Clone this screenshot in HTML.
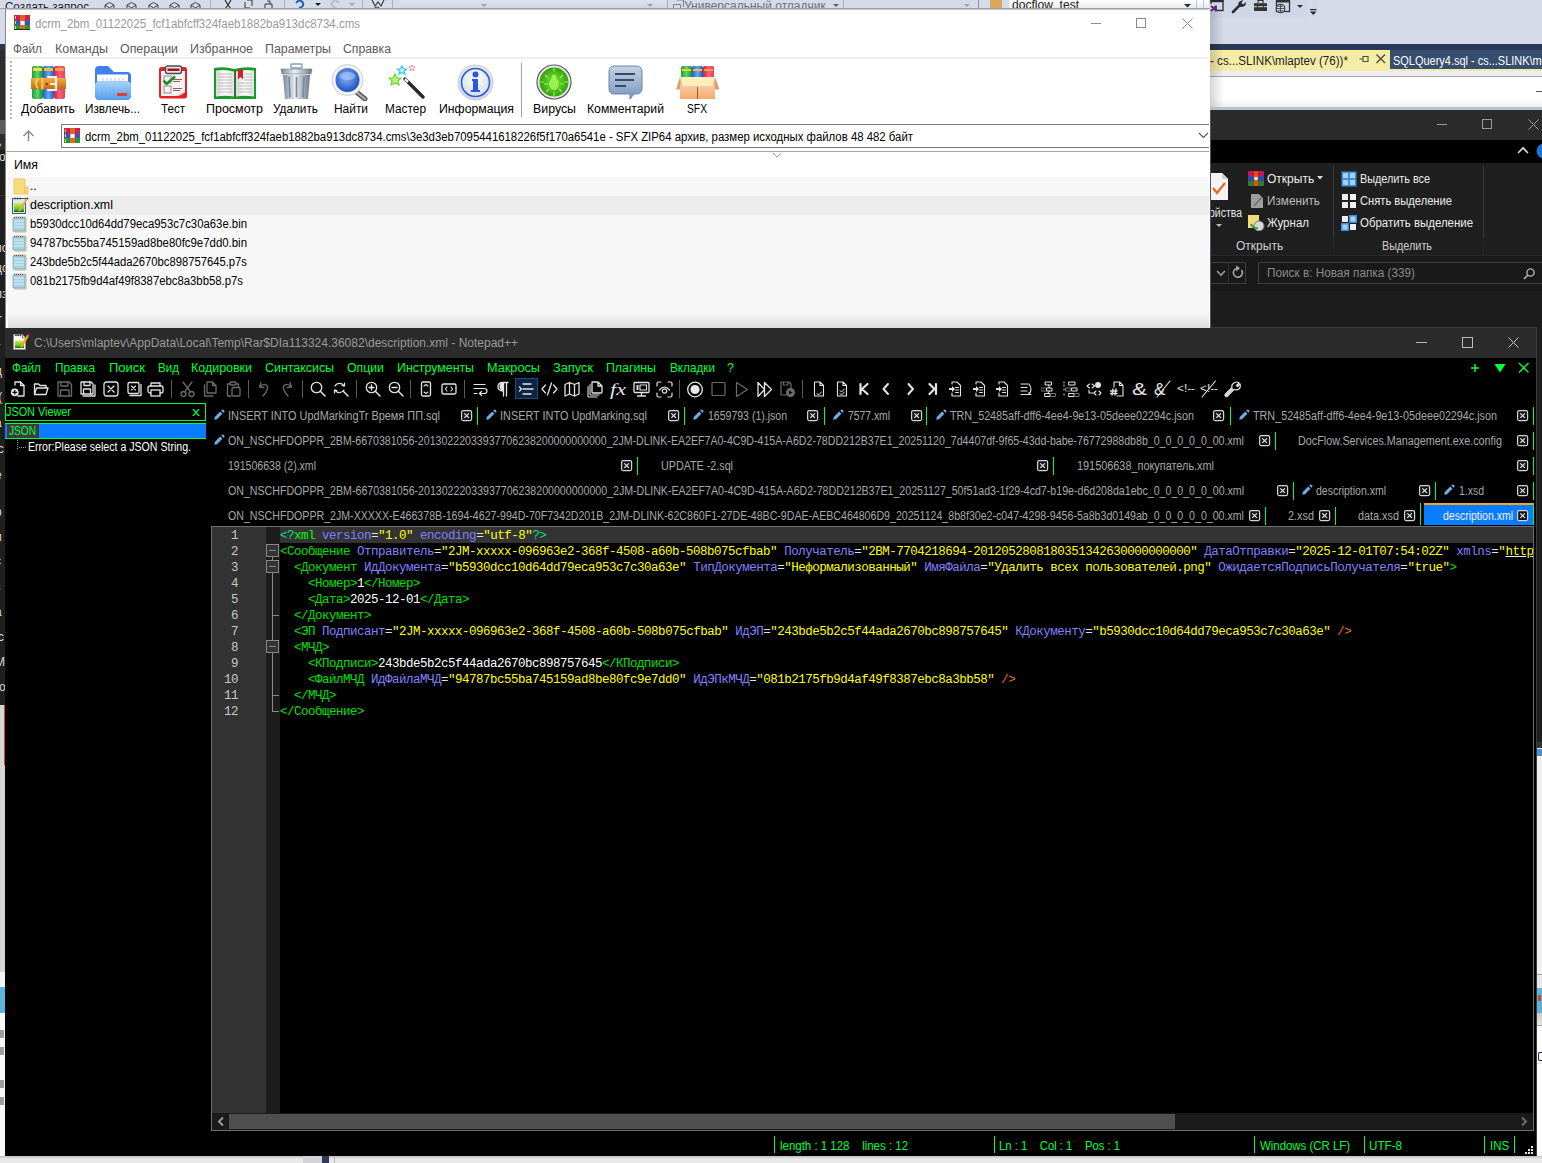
<!DOCTYPE html><html><head><meta charset="utf-8"><title>screen</title><style>

*{margin:0;padding:0;box-sizing:border-box}
html,body{width:1542px;height:1163px;overflow:hidden;background:#000;position:relative}
.a{position:absolute;display:block}
.t{position:absolute;white-space:pre;display:block;transform-origin:0 0}

</style></head><body>
<div class="a" style="left:0px;top:0px;width:6px;height:44px;background:#d6dbe9;"></div>
<div class="a" style="left:0px;top:44px;width:6px;height:6px;background:#293955;"></div>
<div class="a" style="left:0px;top:50px;width:6px;height:100px;background:#2d2d30;"></div>
<div class="a" style="left:5px;top:60px;width:1px;height:15px;background:#e8c860;"></div>
<div class="a" style="left:0px;top:150px;width:6px;height:555px;background:#1f1f1f;"></div>
<div class="a" style="left:0px;top:120px;width:5px;height:14px;background:#5a5a5a;"></div>
<div class="a" style="left:0px;top:195px;width:5px;height:1px;background:#3a3a3a;"></div>
<div class="a" style="left:-5px;top:136px;width:10px;height:14px;overflow:hidden;font:12px/14px 'Liberation Sans',sans-serif;color:#d8d8d8;white-space:pre">ь</div>
<div class="a" style="left:-5px;top:150px;width:10px;height:14px;overflow:hidden;font:12px/14px 'Liberation Sans',sans-serif;color:#d8d8d8;white-space:pre">го</div>
<div class="a" style="left:-5px;top:241px;width:10px;height:14px;overflow:hidden;font:12px/14px 'Liberation Sans',sans-serif;color:#d8d8d8;white-space:pre">ис</div>
<div class="a" style="left:-5px;top:261px;width:10px;height:14px;overflow:hidden;font:12px/14px 'Liberation Sans',sans-serif;color:#d8d8d8;white-space:pre">дс</div>
<div class="a" style="left:-5px;top:287px;width:10px;height:14px;overflow:hidden;font:12px/14px 'Liberation Sans',sans-serif;color:#d8d8d8;white-space:pre">лз</div>
<div class="a" style="left:-5px;top:312px;width:10px;height:14px;overflow:hidden;font:12px/14px 'Liberation Sans',sans-serif;color:#d8d8d8;white-space:pre">lr</div>
<div class="a" style="left:-5px;top:340px;width:10px;height:14px;overflow:hidden;font:12px/14px 'Liberation Sans',sans-serif;color:#d8d8d8;white-space:pre">т</div>
<div class="a" style="left:-5px;top:364px;width:10px;height:14px;overflow:hidden;font:12px/14px 'Liberation Sans',sans-serif;color:#d8d8d8;white-space:pre">д</div>
<div class="a" style="left:-5px;top:390px;width:10px;height:14px;overflow:hidden;font:12px/14px 'Liberation Sans',sans-serif;color:#d8d8d8;white-space:pre">.(</div>
<div class="a" style="left:-5px;top:416px;width:10px;height:14px;overflow:hidden;font:12px/14px 'Liberation Sans',sans-serif;color:#d8d8d8;white-space:pre">а</div>
<div class="a" style="left:-5px;top:442px;width:10px;height:14px;overflow:hidden;font:12px/14px 'Liberation Sans',sans-serif;color:#d8d8d8;white-space:pre">lc</div>
<div class="a" style="left:-5px;top:468px;width:10px;height:14px;overflow:hidden;font:12px/14px 'Liberation Sans',sans-serif;color:#d8d8d8;white-space:pre">е</div>
<div class="a" style="left:-5px;top:505px;width:10px;height:14px;overflow:hidden;font:12px/14px 'Liberation Sans',sans-serif;color:#d8d8d8;white-space:pre">р</div>
<div class="a" style="left:-5px;top:530px;width:10px;height:14px;overflow:hidden;font:12px/14px 'Liberation Sans',sans-serif;color:#d8d8d8;white-space:pre">и</div>
<div class="a" style="left:-5px;top:554px;width:10px;height:14px;overflow:hidden;font:12px/14px 'Liberation Sans',sans-serif;color:#d8d8d8;white-space:pre">с</div>
<div class="a" style="left:-5px;top:580px;width:10px;height:14px;overflow:hidden;font:12px/14px 'Liberation Sans',sans-serif;color:#d8d8d8;white-space:pre">з</div>
<div class="a" style="left:-5px;top:605px;width:10px;height:14px;overflow:hidden;font:12px/14px 'Liberation Sans',sans-serif;color:#d8d8d8;white-space:pre">а</div>
<div class="a" style="left:-5px;top:630px;width:10px;height:14px;overflow:hidden;font:12px/14px 'Liberation Sans',sans-serif;color:#d8d8d8;white-space:pre">lc</div>
<div class="a" style="left:-5px;top:655px;width:10px;height:14px;overflow:hidden;font:12px/14px 'Liberation Sans',sans-serif;color:#d8d8d8;white-space:pre">М</div>
<div class="a" style="left:-5px;top:680px;width:10px;height:14px;overflow:hidden;font:12px/14px 'Liberation Sans',sans-serif;color:#d8d8d8;white-space:pre">ro</div>
<div class="a" style="left:0px;top:705px;width:6px;height:267px;background:#d6d6d6;"></div>
<div class="a" style="left:4px;top:705px;width:1px;height:60px;background:#d04040;"></div>
<div class="a" style="left:0px;top:972px;width:6px;height:15px;background:#f4f4f4;"></div>
<div class="a" style="left:0px;top:987px;width:6px;height:26px;background:#5cb5dc;"></div>
<div class="a" style="left:0px;top:1013px;width:6px;height:143px;background:#fafafa;"></div>
<div class="a" style="left:0px;top:1030px;width:4px;height:8px;background:#404040;opacity:.5"></div>
<div class="a" style="left:0px;top:1047px;width:4px;height:8px;background:#404040;opacity:.5"></div>
<div class="a" style="left:0px;top:1080px;width:4px;height:8px;background:#404040;opacity:.5"></div>
<div class="a" style="left:0px;top:1097px;width:4px;height:8px;background:#404040;opacity:.5"></div>
<div class="a" style="left:0px;top:1156px;width:1542px;height:7px;background:#e9e9e9;"></div>
<div class="a" style="left:0px;top:1156px;width:1542px;height:3px;background:linear-gradient(#bdbdbd,#e9e9e9);"></div>
<div class="a" style="left:303px;top:1156px;width:19px;height:7px;background:#d2d4da;"></div>
<div class="a" style="left:322px;top:1156px;width:7px;height:7px;background:#2a3a58;"></div>
<div class="a" style="left:334px;top:1156px;width:1px;height:7px;background:#b8b8b8;"></div>
<div class="a" style="left:1537px;top:328px;width:5px;height:414px;background:#1e1e1e;"></div>
<div class="a" style="left:1537px;top:742px;width:5px;height:6px;background:#333333;"></div>
<div class="a" style="left:1537px;top:748px;width:5px;height:10px;background:#f4f4f4;"></div>
<div class="a" style="left:1537px;top:749px;width:5px;height:7px;background:#4a90d0;"></div>
<div class="a" style="left:1537px;top:758px;width:5px;height:216px;background:#f0f0f0;"></div>
<div class="a" style="left:1537px;top:974px;width:5px;height:1px;background:#a0a0a0;"></div>
<div class="a" style="left:1537px;top:975px;width:5px;height:13px;background:#e8e8e8;"></div>
<div class="a" style="left:1537px;top:988px;width:5px;height:25px;background:#5ab4d8;"></div>
<div class="a" style="left:1538px;top:995px;width:3px;height:6px;background:#d04040;"></div>
<div class="a" style="left:1537px;top:1013px;width:5px;height:12px;background:linear-gradient(#c8c8c8,#e8e8e8);"></div>
<div class="a" style="left:1537px;top:1025px;width:5px;height:1px;background:#a0a0a0;"></div>
<div class="a" style="left:1537px;top:1026px;width:5px;height:130px;background:#fdfdfd;"></div>
<div class="a" style="left:1538px;top:1052px;width:4px;height:9px;border:1.5px solid #1e2a4a;border-right:none;border-radius:2px 0 0 2px"></div>
<div class="a" style="left:1537px;top:1063px;width:5px;height:1px;background:#dddddd;"></div>
<div class="a" style="left:0px;top:0px;width:1542px;height:9px;background:#d6dbe9;"></div>
<div class="a" style="left:1210px;top:0px;width:332px;height:44px;background:#d6dbe9;"></div>
<div class="a" style="left:1210px;top:0px;width:97px;height:18px;background:#cfd6e5;"></div>
<div class="a" style="left:1307px;top:0px;width:11px;height:18px;background:#d3d9e7;"></div>
<span class="t" id="t0" style="left:5px;top:1px;font-family:'Liberation Sans',sans-serif;font-size:12px;line-height:12px;color:#1e1e1e;transform:scaleX(0.9659);">Создать запрос</span>
<svg class="a" style="left:103px;top:0px;" width="13" height="9" viewBox="0 0 13 9"><path d="M2 5 L6.5 2.5 L11 5 L11 10 L2 10 Z M2 5 L6.5 8 L11 5" fill="none" stroke="#424242" stroke-width="1"/></svg>
<svg class="a" style="left:125px;top:0px;" width="13" height="9" viewBox="0 0 13 9"><path d="M2 5 L6.5 2.5 L11 5 L11 10 L2 10 Z M2 5 L6.5 8 L11 5" fill="none" stroke="#424242" stroke-width="1"/></svg>
<svg class="a" style="left:147px;top:0px;" width="13" height="9" viewBox="0 0 13 9"><path d="M2 5 L6.5 2.5 L11 5 L11 10 L2 10 Z M2 5 L6.5 8 L11 5" fill="none" stroke="#424242" stroke-width="1"/></svg>
<svg class="a" style="left:168px;top:0px;" width="13" height="9" viewBox="0 0 13 9"><path d="M2 5 L6.5 2.5 L11 5 L11 10 L2 10 Z M2 5 L6.5 8 L11 5" fill="none" stroke="#424242" stroke-width="1"/></svg>
<svg class="a" style="left:189px;top:0px;" width="13" height="9" viewBox="0 0 13 9"><path d="M2 5 L6.5 2.5 L11 5 L11 10 L2 10 Z M2 5 L6.5 8 L11 5" fill="none" stroke="#424242" stroke-width="1"/></svg>
<div class="a" style="left:210px;top:0px;width:1px;height:8px;background:#a8b0c0;"></div>
<svg class="a" style="left:222px;top:0px;" width="11" height="9" viewBox="0 0 11 9"><path d="M3 0 L6 5 L9 0 M6 5 L3 9 M6 5 L9 9" fill="none" stroke="#333" stroke-width="1.2"/></svg>
<svg class="a" style="left:243px;top:0px;" width="11" height="9" viewBox="0 0 11 9"><path d="M2 2 L2 8 L7 8 M4 0 L9 0 L9 6" fill="none" stroke="#333" stroke-width="1"/></svg>
<svg class="a" style="left:263px;top:0px;" width="11" height="9" viewBox="0 0 11 9"><path d="M2 4 L2 9 L9 9 L9 4 Z M4 1 L7 1 L7 4" fill="none" stroke="#333" stroke-width="1"/></svg>
<div class="a" style="left:284px;top:0px;width:1px;height:8px;background:#a8b0c0;"></div>
<svg class="a" style="left:294px;top:0px;" width="12" height="9" viewBox="0 0 12 9"><path d="M2 3 Q6 -2 9 3 Q10 7 5 8" fill="none" stroke="#1f5fb5" stroke-width="2"/></svg>
<svg class="a" style="left:315px;top:3px;" width="7" height="4" viewBox="0 0 7 4"><path d="M0 0 L6 0 L3 3 Z" fill="#1e1e1e"/></svg>
<svg class="a" style="left:329px;top:0px;" width="12" height="9" viewBox="0 0 12 9"><path d="M10 3 Q6 -2 3 3 Q2 7 7 8" fill="none" stroke="#b9bdc6" stroke-width="2"/></svg>
<svg class="a" style="left:349px;top:3px;" width="7" height="4" viewBox="0 0 7 4"><path d="M0 0 L6 0 L3 3 Z" fill="#a0a6b0"/></svg>
<div class="a" style="left:362px;top:0px;width:1px;height:8px;background:#a8b0c0;"></div>
<svg class="a" style="left:371px;top:0px;" width="14" height="9" viewBox="0 0 14 9"><path d="M1 0 L4 6 L7 2 L10 6 L13 0 M3 9 Q6 5 9 9" fill="none" stroke="#333" stroke-width="1.1"/></svg>
<div class="a" style="left:392px;top:0px;width:1px;height:8px;background:#a8b0c0;"></div>
<div class="a" style="left:400px;top:0px;width:267px;height:9px;background:linear-gradient(#dfe3ee,#cdd3e1);"></div>
<svg class="a" style="left:481px;top:4px;" width="7" height="4" viewBox="0 0 7 4"><path d="M0 0 L6 0 L3 3 Z" fill="#9aa2b2"/></svg>
<svg class="a" style="left:647px;top:4px;" width="7" height="4" viewBox="0 0 7 4"><path d="M0 0 L6 0 L3 3 Z" fill="#9aa2b2"/></svg>
<div class="a" style="left:667px;top:0px;width:1px;height:8px;background:#a8b0c0;"></div>
<svg class="a" style="left:673px;top:0px;" width="12" height="9" viewBox="0 0 12 9"><path d="M0.5 4.5 L7.5 4.5 L7.5 8.5 L0.5 8.5 Z M3.5 0 L10.5 0 L10.5 7" fill="none" stroke="#7a7f8a" stroke-width="1"/></svg>
<span class="t" id="t1" style="left:684px;top:0px;font-family:'Liberation Sans',sans-serif;font-size:12px;line-height:12px;color:#6e7179;">Универсальный отладчик</span>
<svg class="a" style="left:833px;top:4px;" width="7" height="4" viewBox="0 0 7 4"><path d="M0 0 L6 0 L3 3 Z" fill="#5a5f6a"/></svg>
<div class="a" style="left:843px;top:0px;width:1px;height:8px;background:#a8b0c0;"></div>
<svg class="a" style="left:964px;top:4px;" width="7" height="4" viewBox="0 0 7 4"><path d="M0 0 L6 0 L3 3 Z" fill="#9aa2b2"/></svg>
<div class="a" style="left:978px;top:0px;width:1px;height:8px;background:#8890a0;"></div>
<div class="a" style="left:990px;top:0px;width:12px;height:9px;background:#d9a859;"></div>
<div class="a" style="left:1009px;top:0px;width:200px;height:9px;background:linear-gradient(#ffffff,#e8e8e8);"></div>
<span class="t" id="t2" style="left:1012px;top:-1px;font-family:'Liberation Sans',sans-serif;font-size:12px;line-height:12px;color:#1e1e1e;transform:scaleX(1.0045);">docflow_test</span>
<svg class="a" style="left:1184px;top:4px;" width="8" height="4" viewBox="0 0 8 4"><path d="M0 0 L7 0 L3.5 3.5 Z" fill="#1e2a3e"/></svg>
<div class="a" style="left:1196px;top:0px;width:1px;height:9px;background:#bfc6d4;"></div>
<div class="a" style="left:1203px;top:0px;width:1px;height:9px;background:#bfc6d4;"></div>
<div class="a" style="left:0px;top:8px;width:1210px;height:1px;background:#9aa0aa;"></div>
<svg class="a" style="left:1208px;top:0px;" width="100" height="18" viewBox="0 0 100 18"><rect x="3" y="-1" width="12" height="11.5" fill="none" stroke="#2a2a2a" stroke-width="1.3"/><rect x="2.5" y="0" width="13" height="2.2" fill="#2a2a2a"/><rect x="2" y="4" width="7" height="9" fill="#cfd6e5"/><path d="M3 6 L8 10.5 M3 11 L8 6 M8 5.5 L8 11.5" fill="none" stroke="#68217a" stroke-width="1.8"/><path d="M25 12 L32 5" stroke="#2e2e2e" stroke-width="2.6" stroke-linecap="round"/><path d="M30.5 6.5 Q29 1.5 34 0.5 L35.5 0 L33.5 2.8 L35 4.4 L38 2 Q38.5 6.5 33.5 7" fill="#2e2e2e"/><rect x="46" y="3.2" width="13" height="7.8" fill="#333"/><rect x="46" y="6.2" width="13" height="1" fill="#cfd6e5"/><rect x="49" y="6" width="1" height="1.6" fill="#333"/><rect x="55" y="6" width="1" height="1.6" fill="#333"/><path d="M50 3 L50 0.5 L55 0.5 L55 3" fill="none" stroke="#333" stroke-width="1.2"/><rect x="68.5" y="0" width="13" height="11.5" fill="none" stroke="#333" stroke-width="1.3"/><rect x="68" y="0" width="14" height="2.5" fill="#333"/><circle cx="72.5" cy="8.5" r="4.3" fill="#cfd6e5" stroke="#333" stroke-width="1.1"/><path d="M68.5 8.5 L76.5 8.5 M72.5 4.5 L72.5 12.5 M70 6.2 L75 6.2 M70 10.8 L75 10.8" stroke="#333" stroke-width=".8"/><path d="M89 5 L95 5 L92 8 Z" fill="#1e2a3e"/></svg>
<svg class="a" style="left:1310px;top:8px;" width="8" height="8" viewBox="0 0 8 8"><rect x="0" y="1" width="6.5" height="1.2" fill="#1e2a3e"/><path d="M0 3.5 L6.5 3.5 L3.25 7 Z" fill="#1e2a3e"/></svg>
<div class="a" style="left:1210px;top:44px;width:332px;height:6px;background:#293955;"></div>
<div class="a" style="left:1210px;top:50px;width:180px;height:21px;background:#f5eca6;"></div>
<div class="a" style="left:1210px;top:50px;width:180px;height:1px;background:#fff29d;"></div>
<span class="t" id="t3" style="left:1210px;top:55px;font-family:'Liberation Sans',sans-serif;font-size:12px;line-height:12px;color:#1e1e1e;transform:scaleX(0.9669);">- cs...SLINK\mlaptev (76))*</span>
<svg class="a" style="left:1358px;top:53px;" width="12" height="12" viewBox="0 0 12 12"><path d="M1.5 6 L5 6 M5 3 L5 9 M5 3.5 L10 3.5 L10 8.5 L5 8.5" fill="none" stroke="#4a4a3a" stroke-width="1.1"/></svg>
<svg class="a" style="left:1375px;top:53px;" width="12" height="12" viewBox="0 0 12 12"><path d="M1.5 1.5 L10 10 M10 1.5 L1.5 10" fill="none" stroke="#4a4a3a" stroke-width="1.3"/></svg>
<div class="a" style="left:1390px;top:50px;width:152px;height:19px;background:#364e6f;"></div>
<div class="a" style="left:1390px;top:69px;width:152px;height:2px;background:#f5eca6;"></div>
<span class="t" id="t4" style="left:1393px;top:55px;font-family:'Liberation Sans',sans-serif;font-size:12px;line-height:12px;color:#ffffff;transform:scaleX(0.9140);">SQLQuery4.sql - cs...SLINK\mlaptev</span>
<div class="a" style="left:1210px;top:71px;width:332px;height:5px;background:#eeeef2;"></div>
<div class="a" style="left:1210px;top:76px;width:332px;height:1px;background:#a8a8a8;"></div>
<div class="a" style="left:1210px;top:77px;width:332px;height:30px;background:linear-gradient(#ffffff 0px,#ffffff 22px,#f0f0f0 30px);"></div>
<div class="a" style="left:1210px;top:9px;width:14px;height:98px;background:linear-gradient(90deg,rgba(0,0,0,0.16),rgba(0,0,0,0));"></div>
<div class="a" style="left:1536px;top:91px;width:6px;height:1px;background:#555;"></div>
<div class="a" style="left:1210px;top:107px;width:332px;height:3px;background:#b4c4c8;"></div>
<div class="a" style="left:1210px;top:110px;width:332px;height:30px;background:#2b2b2b;"></div>
<div class="a" style="left:1437px;top:124px;width:10px;height:1px;background:#9a9a9a;"></div>
<div class="a" style="left:1482px;top:119px;width:10px;height:10px;border:1px solid #9a9a9a"></div>
<svg class="a" style="left:1528px;top:119px;" width="11" height="11" viewBox="0 0 11 11"><path d="M0.5 0.5 L10.5 10.5 M10.5 0.5 L0.5 10.5" stroke="#a0a0a0" stroke-width="1"/></svg>
<div class="a" style="left:1210px;top:140px;width:332px;height:23px;background:#000;"></div>
<svg class="a" style="left:1517px;top:146px;" width="12" height="8" viewBox="0 0 12 8"><path d="M1 7 L6 2 L11 7" fill="none" stroke="#dcdcdc" stroke-width="1.6"/></svg>
<svg class="a" style="left:1536px;top:143px;" width="8" height="16" viewBox="0 0 8 16"><circle cx="8" cy="8" r="7.5" fill="#1976d2"/></svg>
<div class="a" style="left:1210px;top:163px;width:332px;height:92px;background:#1f1f1f;"></div>
<svg class="a" style="left:1210px;top:172px;" width="20" height="30" viewBox="0 0 20 30"><path d="M0 1 L12 1 L18 7 L18 28 L0 28 Z" fill="#f4f4f4"/><path d="M12 1 L12 7 L18 7" fill="#cfcfcf"/><path d="M3 16 L7 21 L15 11" fill="none" stroke="#e8641b" stroke-width="2.2"/></svg>
<span class="t" id="t5" style="left:1209px;top:207px;font-family:'Liberation Sans',sans-serif;font-size:12px;line-height:12px;color:#e6e6e6;transform:scaleX(0.8731);">ойства</span>
<svg class="a" style="left:1216px;top:224px;" width="7" height="4" viewBox="0 0 7 4"><path d="M0 0 L6 0 L3 3 Z" fill="#bdbdbd"/></svg>
<svg class="a" style="left:1248px;top:171px;" width="17" height="15" viewBox="0 0 17 15"><rect x="0" y="0" width="16" height="15" fill="#2e7d32"/><rect x="0" y="0" width="16" height="5" fill="#c2185b"/><rect x="0" y="5" width="16" height="5" fill="#3949ab"/><rect x="6" y="0" width="4" height="15" fill="#e65100"/><rect x="6.5" y="6" width="3" height="3" fill="#fff"/></svg>
<span class="t" id="t6" style="left:1267px;top:173px;font-family:'Liberation Sans',sans-serif;font-size:12px;line-height:12px;color:#ececec;">Открыть</span>
<svg class="a" style="left:1317px;top:176px;" width="7" height="5" viewBox="0 0 7 5"><path d="M0 0 L6 0 L3 3.5 Z" fill="#dcdcdc"/></svg>
<svg class="a" style="left:1250px;top:193px;" width="15" height="16" viewBox="0 0 15 16"><path d="M1 1 L9 1 L13 5 L13 15 L1 15 Z" fill="#9e9e9e"/><path d="M4 13 L12 4" stroke="#6e6e6e" stroke-width="1.5"/></svg>
<span class="t" id="t7" style="left:1267px;top:195px;font-family:'Liberation Sans',sans-serif;font-size:12px;line-height:12px;color:#bdbdbd;transform:scaleX(0.9789);">Изменить</span>
<svg class="a" style="left:1248px;top:215px;" width="17" height="16" viewBox="0 0 17 16"><rect x="0" y="0" width="11" height="13" fill="#f1dc79"/><circle cx="11" cy="11" r="5" fill="#d8d8d8" stroke="#7a7a7a"/><path d="M3 9 Q5 14 10 13" fill="none" stroke="#36a03a" stroke-width="2"/></svg>
<span class="t" id="t8" style="left:1267px;top:217px;font-family:'Liberation Sans',sans-serif;font-size:12px;line-height:12px;color:#ececec;transform:scaleX(0.9590);">Журнал</span>
<span class="t" id="t9" style="left:1236px;top:240px;font-family:'Liberation Sans',sans-serif;font-size:12px;line-height:12px;color:#cfcfcf;">Открыть</span>
<div class="a" style="left:1333px;top:166px;width:1px;height:72px;background:#3a3a3a;"></div>
<div class="a" style="left:1333px;top:240px;width:1px;height:15px;background:#262626;"></div>
<svg class="a" style="left:1341px;top:171px;" width="17" height="16" viewBox="0 0 17 16"><rect x="0.5" y="0.5" width="15" height="15" fill="#3d8fd8"/><rect x="2" y="2" width="5" height="5" fill="#a8d2f5"/><rect x="9" y="2" width="5" height="5" fill="#a8d2f5"/><rect x="2" y="9" width="5" height="5" fill="#a8d2f5"/><rect x="9" y="9" width="5" height="5" fill="#a8d2f5"/></svg>
<span class="t" id="t10" style="left:1360px;top:173px;font-family:'Liberation Sans',sans-serif;font-size:12px;line-height:12px;color:#ececec;transform:scaleX(0.9020);">Выделить все</span>
<svg class="a" style="left:1341px;top:193px;" width="17" height="16" viewBox="0 0 17 16"><rect x="1" y="1" width="6" height="6" fill="#f0f0f0"/><rect x="9" y="1" width="6" height="6" fill="#f0f0f0"/><rect x="1" y="9" width="6" height="6" fill="#f0f0f0"/><rect x="9" y="9" width="6" height="6" fill="#f0f0f0"/></svg>
<span class="t" id="t11" style="left:1360px;top:195px;font-family:'Liberation Sans',sans-serif;font-size:12px;line-height:12px;color:#ececec;transform:scaleX(0.9308);">Снять выделение</span>
<svg class="a" style="left:1341px;top:215px;" width="17" height="16" viewBox="0 0 17 16"><rect x="1" y="1" width="6" height="6" fill="#f0f0f0"/><rect x="8" y="0" width="8" height="8" fill="#3d8fd8"/><rect x="9.5" y="1.5" width="5" height="5" fill="#a8d2f5"/><rect x="0" y="8" width="8" height="8" fill="#3d8fd8"/><rect x="1.5" y="9.5" width="5" height="5" fill="#a8d2f5"/><rect x="9" y="9" width="6" height="6" fill="#f0f0f0"/></svg>
<span class="t" id="t12" style="left:1360px;top:217px;font-family:'Liberation Sans',sans-serif;font-size:12px;line-height:12px;color:#ececec;transform:scaleX(0.9533);">Обратить выделение</span>
<span class="t" id="t13" style="left:1382px;top:240px;font-family:'Liberation Sans',sans-serif;font-size:12px;line-height:12px;color:#cfcfcf;transform:scaleX(0.9032);">Выделить</span>
<div class="a" style="left:1483px;top:166px;width:1px;height:72px;background:#3a3a3a;"></div>
<div class="a" style="left:1483px;top:240px;width:1px;height:15px;background:#262626;"></div>
<div class="a" style="left:1210px;top:255px;width:332px;height:1px;background:#2a2a2a;"></div>
<div class="a" style="left:1210px;top:256px;width:332px;height:35px;background:#191919;"></div>
<div class="a" style="left:1206px;top:262px;width:40px;height:22px;border:1px solid #3f3f3f"></div>
<div class="a" style="left:1228px;top:263px;width:1px;height:20px;background:#333;"></div>
<svg class="a" style="left:1216px;top:270px;" width="10" height="7" viewBox="0 0 10 7"><path d="M1 1 L5 5 L9 1" fill="none" stroke="#9a9a9a" stroke-width="1.6"/></svg>
<svg class="a" style="left:1232px;top:265px;" width="12" height="15" viewBox="0 0 12 15"><path d="M9.5 5 A4.5 4.5 0 1 1 5.5 3.2" fill="none" stroke="#a8a8a8" stroke-width="1.6"/><path d="M4 0.5 L8 3 L4.5 6.5" fill="#a8a8a8"/></svg>
<div class="a" style="left:1258px;top:262px;width:290px;height:22px;border:1px solid #3f3f3f"></div>
<span class="t" id="t14" style="left:1267px;top:267px;font-family:'Liberation Sans',sans-serif;font-size:12px;line-height:12px;color:#8a8a8a;transform:scaleX(0.9806);">Поиск в: Новая папка (339)</span>
<svg class="a" style="left:1523px;top:268px;" width="13" height="12" viewBox="0 0 13 12"><circle cx="7.5" cy="4.5" r="3.6" fill="none" stroke="#b0b0b0" stroke-width="1.4"/><path d="M5 7 L1 11" stroke="#b0b0b0" stroke-width="1.7"/></svg>
<div class="a" style="left:1210px;top:291px;width:332px;height:37px;background:#1d1d1d;"></div>
<div class="a" style="left:5px;top:9px;width:1205px;height:320px;background:#ffffff;"></div>
<div class="a" style="left:5px;top:9px;width:1px;height:320px;background:#8a8a8a;"></div>
<div class="a" style="left:6px;top:9px;width:1204px;height:1px;background:#c8c8c8;"></div>
<div class="a" style="left:1209px;top:9px;width:1px;height:320px;background:#fdfdfd;"></div>
<div class="a" style="left:1210px;top:110px;width:1px;height:218px;background:#50545c;"></div>
<svg class="a" style="left:14px;top:15px;" width="16" height="16" viewBox="0 0 16 16"><rect x="0" y="0" width="16" height="5" fill="#c8234f"/><rect x="0" y="5" width="16" height="5" fill="#4a4fb5"/><rect x="0" y="10" width="16" height="5" fill="#1f9a3a"/><rect x="6" y="0" width="5" height="15" fill="#e8621e"/><rect x="6.5" y="6" width="4" height="4" fill="#fff"/><rect x="1" y="1" width="1" height="3" fill="#f5d742"/><rect x="1" y="6" width="1" height="3" fill="#f5d742"/><rect x="1" y="11" width="1" height="3" fill="#f5d742"/><rect x="0" y="14" width="16" height="1" fill="#0a3a14"/></svg>
<span class="t" id="t15" style="left:35px;top:18px;font-family:'Liberation Sans',sans-serif;font-size:12px;line-height:12px;color:#9a9a9a;transform:scaleX(0.9583);">dcrm_2bm_01122025_fcf1abfcff324faeb1882ba913dc8734.cms</span>
<div class="a" style="left:1091px;top:23px;width:10px;height:1px;background:#8a8a8a;"></div>
<div class="a" style="left:1136px;top:18px;width:10px;height:10px;border:1px solid #8a8a8a"></div>
<svg class="a" style="left:1182px;top:18px;" width="11" height="11" viewBox="0 0 11 11"><path d="M0.5 0.5 L10.5 10.5 M10.5 0.5 L0.5 10.5" stroke="#8a8a8a" stroke-width="1"/></svg>
<span class="t" id="t16" style="left:13px;top:43px;font-family:'Liberation Sans',sans-serif;font-size:12px;line-height:12px;color:#5a5a5a;transform:scaleX(0.9825);">Файл</span>
<span class="t" id="t17" style="left:55px;top:43px;font-family:'Liberation Sans',sans-serif;font-size:12px;line-height:12px;color:#5a5a5a;transform:scaleX(1.0424);">Команды</span>
<span class="t" id="t18" style="left:120px;top:43px;font-family:'Liberation Sans',sans-serif;font-size:12px;line-height:12px;color:#5a5a5a;transform:scaleX(1.0331);">Операции</span>
<span class="t" id="t19" style="left:190px;top:43px;font-family:'Liberation Sans',sans-serif;font-size:12px;line-height:12px;color:#5a5a5a;transform:scaleX(1.0357);">Избранное</span>
<span class="t" id="t20" style="left:265px;top:43px;font-family:'Liberation Sans',sans-serif;font-size:12px;line-height:12px;color:#5a5a5a;transform:scaleX(1.0318);">Параметры</span>
<span class="t" id="t21" style="left:343px;top:43px;font-family:'Liberation Sans',sans-serif;font-size:12px;line-height:12px;color:#5a5a5a;transform:scaleX(1.0196);">Справка</span>
<div class="a" style="left:6px;top:57px;width:1203px;height:2px;background:#f0f0f0;"></div>
<div class="a" style="left:10px;top:61px;width:2px;height:2px;background:#b8b8b8;"></div>
<div class="a" style="left:10px;top:65px;width:2px;height:2px;background:#b8b8b8;"></div>
<div class="a" style="left:10px;top:69px;width:2px;height:2px;background:#b8b8b8;"></div>
<div class="a" style="left:10px;top:73px;width:2px;height:2px;background:#b8b8b8;"></div>
<div class="a" style="left:10px;top:77px;width:2px;height:2px;background:#b8b8b8;"></div>
<div class="a" style="left:10px;top:81px;width:2px;height:2px;background:#b8b8b8;"></div>
<div class="a" style="left:10px;top:85px;width:2px;height:2px;background:#b8b8b8;"></div>
<div class="a" style="left:10px;top:89px;width:2px;height:2px;background:#b8b8b8;"></div>
<div class="a" style="left:10px;top:93px;width:2px;height:2px;background:#b8b8b8;"></div>
<div class="a" style="left:10px;top:97px;width:2px;height:2px;background:#b8b8b8;"></div>
<div class="a" style="left:10px;top:101px;width:2px;height:2px;background:#b8b8b8;"></div>
<div class="a" style="left:10px;top:105px;width:2px;height:2px;background:#b8b8b8;"></div>
<div class="a" style="left:10px;top:109px;width:2px;height:2px;background:#b8b8b8;"></div>
<div class="a" style="left:10px;top:113px;width:2px;height:2px;background:#b8b8b8;"></div>
<div class="a" style="left:10px;top:117px;width:2px;height:2px;background:#b8b8b8;"></div>
<div class="a" style="left:10px;top:121px;width:2px;height:2px;background:#b8b8b8;"></div>
<div class="a" style="left:10px;top:125px;width:2px;height:2px;background:#b8b8b8;"></div>
<div class="a" style="left:10px;top:129px;width:2px;height:2px;background:#b8b8b8;"></div>
<div class="a" style="left:10px;top:133px;width:2px;height:2px;background:#b8b8b8;"></div>
<div class="a" style="left:10px;top:137px;width:2px;height:2px;background:#b8b8b8;"></div>
<div class="a" style="left:10px;top:141px;width:2px;height:2px;background:#b8b8b8;"></div>
<div class="a" style="left:10px;top:145px;width:2px;height:2px;background:#b8b8b8;"></div>
<div class="a" style="left:55px;top:124px;width:2px;height:2px;background:#b8b8b8;"></div>
<div class="a" style="left:55px;top:128px;width:2px;height:2px;background:#b8b8b8;"></div>
<div class="a" style="left:55px;top:132px;width:2px;height:2px;background:#b8b8b8;"></div>
<div class="a" style="left:55px;top:136px;width:2px;height:2px;background:#b8b8b8;"></div>
<div class="a" style="left:55px;top:140px;width:2px;height:2px;background:#b8b8b8;"></div>
<div class="a" style="left:55px;top:144px;width:2px;height:2px;background:#b8b8b8;"></div>
<div class="a" style="left:55px;top:148px;width:2px;height:2px;background:#b8b8b8;"></div>
<svg class="a" style="left:0;top:0" width="1" height="1"><defs><linearGradient id="gG" x1="0" x2="1"><stop offset="0" stop-color="#1e9e3a"/><stop offset=".5" stop-color="#5ad46a"/><stop offset="1" stop-color="#1a8a30"/></linearGradient><linearGradient id="gB" x1="0" x2="1"><stop offset="0" stop-color="#1f5fd0"/><stop offset=".5" stop-color="#62a8f5"/><stop offset="1" stop-color="#1f58c0"/></linearGradient><linearGradient id="gR" x1="0" x2="1"><stop offset="0" stop-color="#d8203a"/><stop offset=".5" stop-color="#f5607a"/><stop offset="1" stop-color="#e0406a"/></linearGradient><linearGradient id="gBelt" x1="0" y1="0" x2="0" y2="1"><stop offset="0" stop-color="#f0b040"/><stop offset="1" stop-color="#c86a10"/></linearGradient><linearGradient id="gFold" x1="0" y1="0" x2="0" y2="1"><stop offset="0" stop-color="#a8d4fa"/><stop offset="1" stop-color="#4c9bea"/></linearGradient><linearGradient id="gTrash" x1="0" x2="1"><stop offset="0" stop-color="#7a8a9a"/><stop offset=".45" stop-color="#e8eef4"/><stop offset="1" stop-color="#6a7a8a"/></linearGradient><radialGradient id="gMag" cx=".45" cy=".4" r=".6"><stop offset="0" stop-color="#8ab4f8"/><stop offset="1" stop-color="#1f4fc0"/></radialGradient><radialGradient id="gInfo" cx=".5" cy=".4" r=".6"><stop offset="0" stop-color="#ffffff"/><stop offset="1" stop-color="#cfd6e2"/></radialGradient><radialGradient id="gVir" cx=".5" cy=".5" r=".55"><stop offset="0" stop-color="#7ae830"/><stop offset="1" stop-color="#2a9a10"/></radialGradient><linearGradient id="gCom" x1="0" y1="0" x2="0" y2="1"><stop offset="0" stop-color="#c4d2e6"/><stop offset="1" stop-color="#7c96bc"/></linearGradient><linearGradient id="gBox" x1="0" y1="0" x2="0" y2="1"><stop offset="0" stop-color="#d89868"/><stop offset=".45" stop-color="#f8c8a0"/><stop offset="1" stop-color="#f8a868"/></linearGradient><linearGradient id="gBook" x1="0" x2="1"><stop offset="0" stop-color="#d8d8d8"/><stop offset=".5" stop-color="#ffffff"/><stop offset="1" stop-color="#e0e0e0"/></linearGradient></defs></svg>
<svg class="a" style="left:30px;top:64px;" width="36" height="38" viewBox="0 0 36 38"><rect x="2" y="2" width="11" height="33" rx="2" fill="url(#gG)"/><rect x="13" y="2" width="11" height="33" rx="2" fill="url(#gB)"/><rect x="24" y="2" width="11" height="33" rx="2" fill="url(#gR)"/><rect x="3" y="4" width="9" height="3" fill="#f2e040"/><rect x="14" y="4" width="9" height="3" fill="#f2c040"/><rect x="25" y="4" width="9" height="3" fill="#f5a040"/><rect x="1" y="14" width="35" height="11" fill="url(#gBelt)"/><path d="M8 14.5 Q4 19.5 8 24.5" fill="none" stroke="#ffe070" stroke-width="1.6"/><rect x="11" y="13.5" width="2.5" height="12" fill="#f8c050"/><path d="M17 13 L26 13 L26 26 L17 26" fill="none" stroke="#f6f2ee" stroke-width="2.2"/><circle cx="16.8" cy="20" r="1" fill="#4a2a08"/><rect x="20" y="19" width="5" height="2" fill="#f0f0f0"/></svg>
<svg class="a" style="left:94px;top:64px;" width="38" height="38" viewBox="0 0 38 38"><path d="M1 6 Q1 2 5 2 L14 2 L20 8 L33 8 Q37 8 37 12 L37 31 Q37 36 32 36 L6 36 Q1 36 1 31 Z" fill="#3f7ff0"/><rect x="3" y="10.5" width="31" height="7" fill="#ffffff"/><path d="M9 14 L9 17 M13 14 L13 17 M17 14 L17 17 M21 14 L21 17 M25 14 L25 17 M29 14 L29 17" stroke="#b8c0cc" stroke-width="1"/><path d="M1 21.5 Q1 17.5 5 17.5 L33 17.5 Q37 17.5 37 21.5 L37 31 Q37 36 32 36 L6 36 Q1 36 1 31 Z" fill="url(#gFold)"/><path d="M6 19 L6 35 M10 19 L10 35 M14 19 L14 35 M18 19 L18 35 M22 19 L22 35 M26 19 L26 35 M30 19 L30 35" stroke="#9ccaf4" stroke-width=".7" opacity=".6"/><rect x="23" y="29" width="10" height="3" fill="#e83a2a"/></svg>
<svg class="a" style="left:157px;top:65px;" width="32" height="36" viewBox="0 0 32 36"><rect x="2" y="2" width="28" height="31.5" rx="2.5" fill="#e42222"/><path d="M4 6 L28 6 L28 27 Q24 31 19 31 L4 31 Z" fill="#f4f4f4"/><path d="M28 27 Q24 31 19 31 L24 28 Z" fill="#c8c8c8"/><rect x="8.5" y="1" width="16" height="7.5" rx="2" fill="#e8e8e8" stroke="#4a4a4a" stroke-width="1.4"/><rect x="10.5" y="3.5" width="12" height="2.5" fill="#a01818"/><rect x="7" y="11" width="7" height="7" fill="none" stroke="#9a7a7a" stroke-width=".9"/><rect x="7" y="21" width="7" height="7" fill="none" stroke="#9a7a7a" stroke-width=".9"/><path d="M6.5 15.5 L9.5 19 L18 11.5" fill="none" stroke="#1e8a2a" stroke-width="2.6"/><path d="M16 14.5 L25 14.5 M16 16.5 L23 16.5 M16 23.5 L25 23.5 M16 25.5 L23 25.5" stroke="#8a4a4a" stroke-width=".9"/></svg>
<svg class="a" style="left:212px;top:65px;" width="46" height="36" viewBox="0 0 46 36"><path d="M2 3 Q12 1 22.5 4 Q33 1 44 3 L44 34 L2 34 Z" fill="#1a9a2a"/><path d="M4 5.5 Q13 4 22 6.5 L22 31.5 Q13 30 4 31.5 Z" fill="url(#gBook)"/><path d="M24 6.5 Q33 4 42 5.5 L42 31.5 Q33 30 24 31.5 Z" fill="url(#gBook)"/><path d="M23 5 L23 33" stroke="#3a5a3a" stroke-width="1"/><path d="M6 9 L20 9 M6 12 L20 12 M6 15 L20 15 M6 18 L20 18 M6 21 L20 21 M6 24 L20 24 M6 27 L20 27 M32 9 L40 9 M32 12 L40 12 M26 18 L40 18 M26 21 L40 21 M26 24 L40 24 M26 27 L40 27 M32 15 L40 15" stroke="#b4b4b4" stroke-width=".9"/><path d="M26 4.5 L31 4.5 L31 14.5 L28.5 12 L26 14.5 Z" fill="#d42020"/></svg>
<svg class="a" style="left:280px;top:63px;" width="33" height="38" viewBox="0 0 33 38"><rect x="11" y="1" width="11" height="4" rx="1" fill="none" stroke="#8a9aaa" stroke-width="1.5"/><path d="M1 6 L32 6 L31 11 L2 11 Z" fill="url(#gTrash)" stroke="#6a7a8a" stroke-width=".6"/><path d="M3 12 L30 12 L28 36 L5 36 Z" fill="url(#gTrash)"/><path d="M9 14 L10 34 M16.5 14 L16.5 34 M24 14 L23 34" stroke="#7a8a9a" stroke-width="1.6"/></svg>
<svg class="a" style="left:330px;top:63px;" width="40" height="38" viewBox="0 0 40 38"><path d="M24 27 L35 36" stroke="#5a5a5a" stroke-width="5" stroke-linecap="round"/><path d="M24 27 L35 36" stroke="#b0b0b0" stroke-width="2" stroke-linecap="round"/><circle cx="17.5" cy="17" r="15.5" fill="#f0f4fa" stroke="#c8d0dc" stroke-width="1"/><circle cx="17.5" cy="17" r="12" fill="url(#gMag)"/><ellipse cx="17.5" cy="13" rx="8" ry="4" fill="#a8c8f8" opacity=".6"/></svg>
<svg class="a" style="left:388px;top:64px;" width="40" height="38" viewBox="0 0 40 38"><path d="M17 15 L35 33" stroke="#2a2a2a" stroke-width="3.5" stroke-linecap="round"/><path d="M17 15 L20 18" stroke="#f0f0f0" stroke-width="2.5"/><path d="M7 10 L9 14 L13 14 L10 17 L11 21 L7 19 L3 21 L4 17 L1 14 L5 14 Z" fill="#b8f090" stroke="#6ad830" stroke-width="1.2"/><path d="M14 2 L15.5 5 L18.5 5 L16 7 L17 10 L14 8.5 L11 10 L12 7 L9.5 5 L12.5 5 Z" fill="#d8f8ff" stroke="#30c8e8" stroke-width="1.2"/><path d="M24 1 L25 3 L27 3 L25.5 4.5 L26 6.5 L24 5.5 L22 6.5 L22.5 4.5 L21 3 L23 3 Z" fill="none" stroke="#f07080" stroke-width=".8"/></svg>
<svg class="a" style="left:457px;top:64px;" width="38" height="38" viewBox="0 0 38 38"><circle cx="18.5" cy="18.5" r="17.5" fill="url(#gInfo)" stroke="#c8ccd4"/><circle cx="18.5" cy="18.5" r="14" fill="none" stroke="#2a5ad8" stroke-width="1.6"/><circle cx="18.5" cy="10.5" r="3" fill="#2a5ad8"/><path d="M15 15 L21 15 L21 26 L23 26 L23 28 L14 28 L14 26 L16 26 L16 17 L15 17 Z" fill="#2a5ad8"/></svg>
<div class="a" style="left:521px;top:63px;width:1px;height:54px;background:#a0a0a0;"></div>
<svg class="a" style="left:536px;top:64px;" width="36" height="37" viewBox="0 0 36 37"><circle cx="18" cy="18" r="17" fill="#e8e8e8" stroke="#5a5a5a" stroke-width="1.2"/><circle cx="18" cy="18" r="14.5" fill="url(#gVir)"/><path d="M18 4 L18 8 M18 28 L18 32 M4 18 L8 18 M28 18 L32 18" stroke="#8af040" stroke-width="1.2"/><ellipse cx="18" cy="20" rx="5" ry="6" fill="#9af050"/><circle cx="18" cy="13" r="2.5" fill="#9af050"/><path d="M12 14 L9 11 M24 14 L27 11 M12 20 L8 20 M24 20 L28 20 M13 25 L10 28 M23 25 L26 28" stroke="#9af050" stroke-width="1.2"/></svg>
<svg class="a" style="left:608px;top:65px;" width="36" height="36" viewBox="0 0 36 36"><path d="M6 1 L28 1 Q34 1 34 7 L34 23 Q34 29 28 29 L26 29 L22 34 L22 29 L6 29 Q1 29 1 23 L1 7 Q1 1 6 1 Z" fill="url(#gCom)" stroke="#6a84ac" stroke-width="1"/><path d="M7 9 L27 9 M7 15 L26 15 M7 21 L18 21" stroke="#3a4a62" stroke-width="2"/></svg>
<svg class="a" style="left:675px;top:64px;" width="46" height="37" viewBox="0 0 46 37"><rect x="6" y="2" width="11" height="12" rx="1.5" fill="url(#gG)"/><rect x="17" y="2" width="11" height="12" rx="1.5" fill="url(#gB)"/><rect x="28" y="2" width="11" height="12" rx="1.5" fill="url(#gR)"/><rect x="7" y="5" width="9" height="2" fill="#f8d030"/><rect x="18" y="5" width="9" height="2" fill="#f8c030"/><rect x="29" y="5" width="9" height="2" fill="#f8a030"/><path d="M5 13 L1 25.5 L5 25.5 Z" fill="#d8a070"/><path d="M40 13 L44.5 25.5 L40 25.5 Z" fill="#d8a070"/><rect x="5" y="13" width="35" height="22" fill="url(#gBox)"/><path d="M5 13 L40 13 L37.5 22 L7.5 22 Z" fill="#fdeebc"/><path d="M22.5 23 L22.5 35" stroke="#a05a28" stroke-width="1"/></svg>
<span class="t" id="t22" style="left:21px;top:103px;font-family:'Liberation Sans',sans-serif;font-size:12px;line-height:12px;color:#000;transform:scaleX(1.0180);">Добавить</span>
<span class="t" id="t23" style="left:85px;top:103px;font-family:'Liberation Sans',sans-serif;font-size:12px;line-height:12px;color:#000;transform:scaleX(0.9819);">Извлечь...</span>
<span class="t" id="t24" style="left:161px;top:103px;font-family:'Liberation Sans',sans-serif;font-size:12px;line-height:12px;color:#000;transform:scaleX(0.9666);">Тест</span>
<span class="t" id="t25" style="left:206px;top:103px;font-family:'Liberation Sans',sans-serif;font-size:12px;line-height:12px;color:#000;transform:scaleX(1.0399);">Просмотр</span>
<span class="t" id="t26" style="left:273px;top:103px;font-family:'Liberation Sans',sans-serif;font-size:12px;line-height:12px;color:#000;transform:scaleX(0.9819);">Удалить</span>
<span class="t" id="t27" style="left:334px;top:103px;font-family:'Liberation Sans',sans-serif;font-size:12px;line-height:12px;color:#000;transform:scaleX(0.9927);">Найти</span>
<span class="t" id="t28" style="left:385px;top:103px;font-family:'Liberation Sans',sans-serif;font-size:12px;line-height:12px;color:#000;transform:scaleX(0.9876);">Мастер</span>
<span class="t" id="t29" style="left:439px;top:103px;font-family:'Liberation Sans',sans-serif;font-size:12px;line-height:12px;color:#000;transform:scaleX(1.0206);">Информация</span>
<span class="t" id="t30" style="left:533px;top:103px;font-family:'Liberation Sans',sans-serif;font-size:12px;line-height:12px;color:#000;transform:scaleX(1.0299);">Вирусы</span>
<span class="t" id="t31" style="left:587px;top:103px;font-family:'Liberation Sans',sans-serif;font-size:12px;line-height:12px;color:#000;transform:scaleX(1.0186);">Комментарий</span>
<span class="t" id="t32" style="left:687px;top:103px;font-family:'Liberation Sans',sans-serif;font-size:12px;line-height:12px;color:#000;transform:scaleX(0.8568);">SFX</span>
<div class="a" style="left:6px;top:120px;width:1203px;height:30px;background:#ffffff;"></div>
<svg class="a" style="left:22px;top:129px;" width="13" height="13" viewBox="0 0 13 13"><path d="M6.5 12 L6.5 2 M1.5 7 L6.5 2 L11.5 7" fill="none" stroke="#8a8a8a" stroke-width="1.5"/></svg>
<div class="a" style="left:61px;top:124px;width:1148px;height:24px;background:#fff;border:1px solid #7a7a7a;border-right:none"></div>
<svg class="a" style="left:64px;top:128px;" width="17" height="16" viewBox="0 0 17 16"><rect x="0" y="0" width="16" height="5" fill="#c8234f"/><rect x="0" y="5" width="16" height="5" fill="#4a4fb5"/><rect x="0" y="10" width="16" height="5" fill="#1f9a3a"/><rect x="6" y="0" width="5" height="15" fill="#e8621e"/><rect x="6.5" y="6" width="4" height="4" fill="#fff"/><rect x="1" y="1" width="1" height="3" fill="#f5d742"/><rect x="1" y="6" width="1" height="3" fill="#f5d742"/><rect x="1" y="11" width="1" height="3" fill="#f5d742"/></svg>
<span class="t" id="t33" style="left:85px;top:131px;font-family:'Liberation Sans',sans-serif;font-size:12px;line-height:12px;color:#000;transform:scaleX(0.9479);">dcrm_2bm_01122025_fcf1abfcff324faeb1882ba913dc8734.cms\3e3d3eb7095441618226f5f170a6541e - SFX ZIP64 архив, размер исходных файлов 48 482 байт</span>
<svg class="a" style="left:1198px;top:132px;" width="11" height="7" viewBox="0 0 11 7"><path d="M1 1 L5.5 5.5 L10 1" fill="none" stroke="#555" stroke-width="1.1"/></svg>
<div class="a" style="left:6px;top:151px;width:1203px;height:1px;background:#a8a8a8;"></div>
<div class="a" style="left:6px;top:152px;width:1202px;height:25px;background:#ffffff;"></div>
<span class="t" id="t34" style="left:14px;top:159px;font-family:'Liberation Sans',sans-serif;font-size:12px;line-height:12px;color:#000;transform:scaleX(1.0267);">Имя</span>
<svg class="a" style="left:772px;top:152px;" width="10" height="6" viewBox="0 0 10 6"><path d="M1 1 L5 5 L9 1" fill="none" stroke="#9a9a9a" stroke-width="1"/></svg>
<div class="a" style="left:8px;top:177px;width:1201px;height:151px;background:#f7f7f7;"></div>
<div class="a" style="left:28px;top:196px;width:1181px;height:19px;background:#ececec;"></div>
<svg class="a" style="left:13px;top:178px;" width="17" height="17" viewBox="0 0 17 17"><path d="M1 1 L12 1 L12 16 L1 16 Z" fill="#f8dc7c" stroke="#e8c050" stroke-width=".8"/><rect x="12" y="9" width="3" height="7" fill="#f8dc7c" stroke="#e8c050" stroke-width=".8"/></svg>
<span class="t" id="t35" style="left:30px;top:180px;font-family:'Liberation Sans',sans-serif;font-size:12px;line-height:12px;color:#000;">..</span>
<svg class="a" style="left:12px;top:197px;" width="17" height="17" viewBox="0 0 17 17"><rect x="0.5" y="1.5" width="13" height="15" fill="#dce8f4" stroke="#3a5a7a" stroke-width="1"/><path d="M3 0.5 L3 2.5 M5.5 0.5 L5.5 2.5 M8 0.5 L8 2.5" stroke="#3a3a3a" stroke-width=".9"/><rect x="2" y="6" width="10" height="9" fill="url(#gNp)"/><path d="M7 14 L14.5 2.5" stroke="#e8b030" stroke-width="2"/><circle cx="15.3" cy="1.5" r="1.1" fill="#b01010"/></svg>
<span class="t" id="t36" style="left:30px;top:199px;font-family:'Liberation Sans',sans-serif;font-size:12px;line-height:12px;color:#000;transform:scaleX(1.0371);">description.xml</span>
<svg class="a" style="left:12px;top:216px;" width="17" height="17" viewBox="0 0 17 17"><path d="M3 1 L14 1 L14 16 L3 16 Z" fill="#f4efe0" stroke="#b8a880" stroke-width=".8"/><path d="M1 2 L13 2 L13 15 L1 15 Z" fill="#a8d0e0" stroke="#6a9ab0" stroke-width=".6"/><path d="M2 5 L12 5 M2 8 L12 8 M2 11 L12 11" stroke="#d8f0f8" stroke-width="1"/><path d="M2 1.5 L12 1.5" stroke="#5a5a5a" stroke-width="1" stroke-dasharray="1 1"/></svg>
<span class="t" id="t37" style="left:30px;top:218px;font-family:'Liberation Sans',sans-serif;font-size:12px;line-height:12px;color:#000;transform:scaleX(0.9453);">b5930dcc10d64dd79eca953c7c30a63e.bin</span>
<svg class="a" style="left:12px;top:235px;" width="17" height="17" viewBox="0 0 17 17"><path d="M3 1 L14 1 L14 16 L3 16 Z" fill="#f4efe0" stroke="#b8a880" stroke-width=".8"/><path d="M1 2 L13 2 L13 15 L1 15 Z" fill="#a8d0e0" stroke="#6a9ab0" stroke-width=".6"/><path d="M2 5 L12 5 M2 8 L12 8 M2 11 L12 11" stroke="#d8f0f8" stroke-width="1"/><path d="M2 1.5 L12 1.5" stroke="#5a5a5a" stroke-width="1" stroke-dasharray="1 1"/></svg>
<span class="t" id="t38" style="left:30px;top:237px;font-family:'Liberation Sans',sans-serif;font-size:12px;line-height:12px;color:#000;transform:scaleX(0.9508);">94787bc55ba745159ad8be80fc9e7dd0.bin</span>
<svg class="a" style="left:12px;top:254px;" width="17" height="17" viewBox="0 0 17 17"><path d="M3 1 L14 1 L14 16 L3 16 Z" fill="#f4efe0" stroke="#b8a880" stroke-width=".8"/><path d="M1 2 L13 2 L13 15 L1 15 Z" fill="#a8d0e0" stroke="#6a9ab0" stroke-width=".6"/><path d="M2 5 L12 5 M2 8 L12 8 M2 11 L12 11" stroke="#d8f0f8" stroke-width="1"/><path d="M2 1.5 L12 1.5" stroke="#5a5a5a" stroke-width="1" stroke-dasharray="1 1"/></svg>
<span class="t" id="t39" style="left:30px;top:256px;font-family:'Liberation Sans',sans-serif;font-size:12px;line-height:12px;color:#000;transform:scaleX(0.9371);">243bde5b2c5f44ada2670bc898757645.p7s</span>
<svg class="a" style="left:12px;top:273px;" width="17" height="17" viewBox="0 0 17 17"><path d="M3 1 L14 1 L14 16 L3 16 Z" fill="#f4efe0" stroke="#b8a880" stroke-width=".8"/><path d="M1 2 L13 2 L13 15 L1 15 Z" fill="#a8d0e0" stroke="#6a9ab0" stroke-width=".6"/><path d="M2 5 L12 5 M2 8 L12 8 M2 11 L12 11" stroke="#d8f0f8" stroke-width="1"/><path d="M2 1.5 L12 1.5" stroke="#5a5a5a" stroke-width="1" stroke-dasharray="1 1"/></svg>
<span class="t" id="t40" style="left:30px;top:275px;font-family:'Liberation Sans',sans-serif;font-size:12px;line-height:12px;color:#000;transform:scaleX(0.9443);">081b2175fb9d4af49f8387ebc8a3bb58.p7s</span>
<div class="a" style="left:8px;top:312px;width:1201px;height:16px;background:linear-gradient(rgba(247,247,247,0),#dcdcdc);"></div>
<div class="a" style="left:5px;top:328px;width:1532px;height:828px;background:#000;"></div>
<div class="a" style="left:5px;top:328px;width:1532px;height:30px;background:#2b2b2b;"></div>
<div class="a" style="left:1536px;top:328px;width:1px;height:828px;background:#3c3c3c;"></div>
<div class="a" style="left:1210px;top:327px;width:327px;height:1px;background:#3c3c3c;"></div>
<svg class="a" style="left:13px;top:333px;" width="18" height="18" viewBox="0 0 18 18"><defs><linearGradient id="gNp" x1="0" y1="0" x2="0" y2="1"><stop offset="0" stop-color="#e8e850"/><stop offset=".7" stop-color="#50c830"/><stop offset="1" stop-color="#0a5a0a"/></linearGradient></defs><path d="M0.5 1.5 L9.5 1.5 L12.5 4.5 L12.5 16.5 L0.5 16.5 Z" fill="#fff" stroke="#8a8a8a" stroke-width=".6"/><circle cx="3" cy="2.3" r=".9" fill="#333"/><circle cx="5.2" cy="2.3" r=".9" fill="#333"/><circle cx="7.4" cy="2.3" r=".9" fill="#333"/><path d="M9.5 1.5 L9.5 4.8 L12.5 4.8" fill="none" stroke="#555" stroke-width=".8"/><rect x="2" y="7.5" width="9" height="7.5" fill="url(#gNp)"/><path d="M8.2 14.2 L14.6 3.2" stroke="#f4a800" stroke-width="2.2"/><path d="M14.6 3.2 L15.4 1.9" stroke="#a0b8d8" stroke-width="2"/><circle cx="15.8" cy="1.4" r="1.2" fill="#c00000"/></svg>
<span class="t" id="t41" style="left:34px;top:337px;font-family:'Liberation Sans',sans-serif;font-size:12px;line-height:12px;color:#9a9a9a;">C:\Users\mlaptev\AppData\Local\Temp\Rar$DIa113324.36082\description.xml - Notepad++</span>
<div class="a" style="left:1416px;top:342px;width:11px;height:1px;background:#bdbdbd;"></div>
<div class="a" style="left:1462px;top:337px;width:11px;height:11px;border:1px solid #bdbdbd"></div>
<svg class="a" style="left:1508px;top:337px;" width="11" height="11" viewBox="0 0 11 11"><path d="M0.5 0.5 L10.5 10.5 M10.5 0.5 L0.5 10.5" stroke="#c4c4c4" stroke-width="1"/></svg>
<span class="t" id="t42" style="left:12px;top:362px;font-family:'Liberation Sans',sans-serif;font-size:12px;line-height:12px;color:#00ff3a;transform:scaleX(0.9825);">Файл</span>
<span class="t" id="t43" style="left:55px;top:362px;font-family:'Liberation Sans',sans-serif;font-size:12px;line-height:12px;color:#00ff3a;transform:scaleX(0.9865);">Правка</span>
<span class="t" id="t44" style="left:109px;top:362px;font-family:'Liberation Sans',sans-serif;font-size:12px;line-height:12px;color:#00ff3a;transform:scaleX(1.0822);">Поиск</span>
<span class="t" id="t45" style="left:158px;top:362px;font-family:'Liberation Sans',sans-serif;font-size:12px;line-height:12px;color:#00ff3a;transform:scaleX(0.9669);">Вид</span>
<span class="t" id="t46" style="left:191px;top:362px;font-family:'Liberation Sans',sans-serif;font-size:12px;line-height:12px;color:#00ff3a;transform:scaleX(1.0377);">Кодировки</span>
<span class="t" id="t47" style="left:265px;top:362px;font-family:'Liberation Sans',sans-serif;font-size:12px;line-height:12px;color:#00ff3a;transform:scaleX(1.0337);">Синтаксисы</span>
<span class="t" id="t48" style="left:347px;top:362px;font-family:'Liberation Sans',sans-serif;font-size:12px;line-height:12px;color:#00ff3a;transform:scaleX(1.0242);">Опции</span>
<span class="t" id="t49" style="left:397px;top:362px;font-family:'Liberation Sans',sans-serif;font-size:12px;line-height:12px;color:#00ff3a;transform:scaleX(1.0290);">Инструменты</span>
<span class="t" id="t50" style="left:487px;top:362px;font-family:'Liberation Sans',sans-serif;font-size:12px;line-height:12px;color:#00ff3a;transform:scaleX(1.0593);">Макросы</span>
<span class="t" id="t51" style="left:553px;top:362px;font-family:'Liberation Sans',sans-serif;font-size:12px;line-height:12px;color:#00ff3a;transform:scaleX(1.0653);">Запуск</span>
<span class="t" id="t52" style="left:606px;top:362px;font-family:'Liberation Sans',sans-serif;font-size:12px;line-height:12px;color:#00ff3a;transform:scaleX(1.0279);">Плагины</span>
<span class="t" id="t53" style="left:670px;top:362px;font-family:'Liberation Sans',sans-serif;font-size:12px;line-height:12px;color:#00ff3a;transform:scaleX(0.9776);">Вкладки</span>
<span class="t" id="t54" style="left:727px;top:362px;font-family:'Liberation Sans',sans-serif;font-size:12px;line-height:12px;color:#00ff3a;transform:scaleX(1.0467);">?</span>
<svg class="a" style="left:1470px;top:363px;" width="10" height="10" viewBox="0 0 10 10"><path d="M5 1 L5 9 M1 5 L9 5" stroke="#00ff3a" stroke-width="1.4"/></svg>
<svg class="a" style="left:1494px;top:363px;" width="12" height="10" viewBox="0 0 12 10"><path d="M0.5 1 L11.5 1 L6 9.5 Z" fill="#00ff3a"/></svg>
<svg class="a" style="left:1518px;top:362px;" width="12" height="11" viewBox="0 0 12 11"><path d="M1 1 L10.5 10.5 M10.5 1 L1 10.5" stroke="#00ff3a" stroke-width="1.3"/></svg>
<svg class="a" style="left:10px;top:381px;" width="16" height="17" viewBox="0 0 16 17"><path d="M5 4 L5 1 L10.5 1 L14 4.5 L14 15 L8 15" fill="none" stroke="#e4e4e4" stroke-width="1.3" stroke-linejoin="round" stroke-linecap="round"/><path d="M10.5 1 L10.5 4.5 L14 4.5" fill="none" stroke="#e4e4e4" stroke-width="1.3" stroke-linejoin="round" stroke-linecap="round"/><circle cx="4.8" cy="11.3" r="3.9" fill="#e4e4e4"/><path d="M4.8 9 L4.8 13.6 M2.5 11.3 L7.1 11.3" stroke="#000" stroke-width="1.2"/></svg>
<svg class="a" style="left:33px;top:381px;" width="16" height="17" viewBox="0 0 16 17"><path d="M1.5 13.5 L1.5 3 L5.5 3 L7 4.5 L13 4.5 L13 6.5" fill="none" stroke="#e4e4e4" stroke-width="1.3" stroke-linejoin="round" stroke-linecap="round"/><path d="M1.5 13.5 L3.5 7 L15 7 L13 13.5 Z" fill="none" stroke="#e4e4e4" stroke-width="1.3" stroke-linejoin="round" stroke-linecap="round"/></svg>
<svg class="a" style="left:57px;top:381px;" width="16" height="17" viewBox="0 0 16 17"><path d="M1 1 L12 1 L14.5 3.5 L14.5 15 L1 15 Z" fill="none" stroke="#6a6a6a" stroke-width="1.3" stroke-linejoin="round" stroke-linecap="round"/><path d="M4 1 L4 5 L11 5 L11 1 M3.5 15 L3.5 9 L12 9 L12 15" fill="none" stroke="#6a6a6a" stroke-width="1.3" stroke-linejoin="round" stroke-linecap="round"/></svg>
<svg class="a" style="left:80px;top:381px;" width="16" height="17" viewBox="0 0 16 17"><path d="M1 1 L11 1 L13 3 L13 13 L1 13 Z" fill="none" stroke="#e4e4e4" stroke-width="1.3" stroke-linejoin="round" stroke-linecap="round"/><path d="M4 1 L4 4.5 L10 4.5 L10 1 M3.5 13 L3.5 8 L10.5 8 L10.5 13 M3 15 L15 15 L15 4" fill="none" stroke="#e4e4e4" stroke-width="1.3" stroke-linejoin="round" stroke-linecap="round"/></svg>
<svg class="a" style="left:103px;top:381px;" width="16" height="17" viewBox="0 0 16 17"><rect x="1" y="1" width="14" height="14" rx="2.5" fill="none" stroke="#e4e4e4" stroke-width="1.3" stroke-linejoin="round" stroke-linecap="round"/><path d="M5 5 L11 11 M11 5 L5 11" fill="none" stroke="#e4e4e4" stroke-width="1.3" stroke-linejoin="round" stroke-linecap="round"/></svg>
<svg class="a" style="left:127px;top:381px;" width="16" height="17" viewBox="0 0 16 17"><rect x="1" y="1.5" width="11" height="11" rx="1.5" fill="none" stroke="#e4e4e4" stroke-width="1.3" stroke-linejoin="round" stroke-linecap="round"/><path d="M4.5 5 L8.5 9 M8.5 5 L4.5 9" fill="none" stroke="#e4e4e4" stroke-width="1.1" stroke-linejoin="round" stroke-linecap="round"/><path d="M3 14.5 L14 14.5 L14 3.5" fill="none" stroke="#e4e4e4" stroke-width="1.3" stroke-linejoin="round" stroke-linecap="round"/></svg>
<svg class="a" style="left:147px;top:381px;" width="17" height="17" viewBox="0 0 17 17"><path d="M4 5 L4 2 L13 2 L13 5" fill="none" stroke="#e4e4e4" stroke-width="1.3" stroke-linejoin="round" stroke-linecap="round"/><rect x="1" y="5" width="15" height="7" rx="2" fill="none" stroke="#e4e4e4" stroke-width="1.3" stroke-linejoin="round" stroke-linecap="round"/><rect x="4" y="9" width="9" height="6" fill="#000" stroke="#e4e4e4" stroke-width="1.3"/></svg>
<div class="a" style="left:171px;top:380px;width:1px;height:18px;background:#5a5a5a;"></div>
<svg class="a" style="left:180px;top:381px;" width="15" height="17" viewBox="0 0 15 17"><circle cx="3.5" cy="13" r="2.5" fill="none" stroke="#6a6a6a" stroke-width="1.3" stroke-linejoin="round" stroke-linecap="round"/><circle cx="11.5" cy="13" r="2.5" fill="none" stroke="#6a6a6a" stroke-width="1.3" stroke-linejoin="round" stroke-linecap="round"/><path d="M4.5 10.8 L12 1 M10.5 10.8 L3 1" fill="none" stroke="#6a6a6a" stroke-width="1.3" stroke-linejoin="round" stroke-linecap="round"/></svg>
<svg class="a" style="left:203px;top:381px;" width="15" height="17" viewBox="0 0 15 17"><path d="M4 12 L4 1 L9.5 1 L13 4.5 L13 12 Z M9.5 1 L9.5 4.5 L13 4.5" fill="none" stroke="#6a6a6a" stroke-width="1.3" stroke-linejoin="round" stroke-linecap="round"/><path d="M1.5 4 L1.5 15 L10 15" fill="none" stroke="#6a6a6a" stroke-width="1.3" stroke-linejoin="round" stroke-linecap="round"/></svg>
<svg class="a" style="left:226px;top:381px;" width="15" height="17" viewBox="0 0 15 17"><path d="M4 3 L1.5 3 L1.5 15 L5 15 M10 3 L12.5 3 L12.5 6" fill="none" stroke="#6a6a6a" stroke-width="1.3" stroke-linejoin="round" stroke-linecap="round"/><rect x="4" y="1" width="6" height="3" rx="1" fill="none" stroke="#6a6a6a" stroke-width="1.3" stroke-linejoin="round" stroke-linecap="round"/><rect x="6" y="6.5" width="8" height="8.5" rx="1" fill="none" stroke="#6a6a6a" stroke-width="1.3" stroke-linejoin="round" stroke-linecap="round"/></svg>
<div class="a" style="left:248px;top:380px;width:1px;height:18px;background:#5a5a5a;"></div>
<svg class="a" style="left:258px;top:381px;" width="12" height="17" viewBox="0 0 12 17"><path d="M3 1.5 L1.5 6 L6 6.5 M1.8 5.8 Q5 2 8.5 4 Q12 7 5 15" fill="none" stroke="#6a6a6a" stroke-width="1.3" stroke-linejoin="round" stroke-linecap="round"/></svg>
<svg class="a" style="left:281px;top:381px;" width="12" height="17" viewBox="0 0 12 17"><path d="M9 1.5 L10.5 6 L6 6.5 M10.2 5.8 Q7 2 3.5 4 Q0 7 7 15" fill="none" stroke="#6a6a6a" stroke-width="1.3" stroke-linejoin="round" stroke-linecap="round"/></svg>
<div class="a" style="left:302px;top:380px;width:1px;height:18px;background:#5a5a5a;"></div>
<svg class="a" style="left:310px;top:381px;" width="16" height="17" viewBox="0 0 16 17"><circle cx="6.5" cy="6.5" r="5.2" fill="none" stroke="#e4e4e4" stroke-width="1.3" stroke-linejoin="round" stroke-linecap="round"/><path d="M10.3 10.3 L15 15" fill="none" stroke="#e4e4e4" stroke-width="1.5" stroke-linejoin="round" stroke-linecap="round"/></svg>
<svg class="a" style="left:333px;top:381px;" width="16" height="17" viewBox="0 0 16 17"><path d="M11 5 A5.2 5.2 0 0 0 2 5 M2 9 A5.2 5.2 0 0 0 11 9" fill="none" stroke="#e4e4e4" stroke-width="1.3" stroke-linejoin="round" stroke-linecap="round"/><path d="M9 4.5 L11.5 5 L11.5 2 M4 9.5 L1.5 9 L1.5 12" fill="none" stroke="#e4e4e4" stroke-width="1.2" stroke-linejoin="round" stroke-linecap="round"/><path d="M10.3 10.3 L15 15" fill="none" stroke="#e4e4e4" stroke-width="1.5" stroke-linejoin="round" stroke-linecap="round"/></svg>
<div class="a" style="left:356px;top:380px;width:1px;height:18px;background:#5a5a5a;"></div>
<svg class="a" style="left:365px;top:381px;" width="16" height="17" viewBox="0 0 16 17"><circle cx="6.5" cy="6.5" r="5.2" fill="none" stroke="#e4e4e4" stroke-width="1.3" stroke-linejoin="round" stroke-linecap="round"/><path d="M6.5 4 L6.5 9 M4 6.5 L9 6.5" fill="none" stroke="#e4e4e4" stroke-width="1.4" stroke-linejoin="round" stroke-linecap="round"/><path d="M10.3 10.3 L15 15" fill="none" stroke="#e4e4e4" stroke-width="1.5" stroke-linejoin="round" stroke-linecap="round"/></svg>
<svg class="a" style="left:388px;top:381px;" width="16" height="17" viewBox="0 0 16 17"><circle cx="6.5" cy="6.5" r="5.2" fill="none" stroke="#e4e4e4" stroke-width="1.3" stroke-linejoin="round" stroke-linecap="round"/><path d="M4 6.5 L9 6.5" fill="none" stroke="#e4e4e4" stroke-width="1.4" stroke-linejoin="round" stroke-linecap="round"/><path d="M10.3 10.3 L15 15" fill="none" stroke="#e4e4e4" stroke-width="1.5" stroke-linejoin="round" stroke-linecap="round"/></svg>
<div class="a" style="left:410px;top:380px;width:1px;height:18px;background:#5a5a5a;"></div>
<svg class="a" style="left:420px;top:381px;" width="12" height="17" viewBox="0 0 12 17"><rect x="1.5" y="1" width="9" height="14" rx="1.5" fill="none" stroke="#e4e4e4" stroke-width="1.3" stroke-linejoin="round" stroke-linecap="round"/><path d="M4 5 L6 3.5 L8 5 M4 11 L6 12.5 L8 11" fill="none" stroke="#e4e4e4" stroke-width="1.1" stroke-linejoin="round" stroke-linecap="round"/></svg>
<svg class="a" style="left:441px;top:381px;" width="16" height="17" viewBox="0 0 16 17"><rect x="1" y="3" width="14" height="10" rx="1.5" fill="none" stroke="#e4e4e4" stroke-width="1.3" stroke-linejoin="round" stroke-linecap="round"/><path d="M6 6 L4.5 8 L6 10 M10 6 L11.5 8 L10 10" fill="none" stroke="#e4e4e4" stroke-width="1.1" stroke-linejoin="round" stroke-linecap="round"/></svg>
<div class="a" style="left:464px;top:380px;width:1px;height:18px;background:#5a5a5a;"></div>
<svg class="a" style="left:473px;top:381px;" width="15" height="17" viewBox="0 0 15 17"><path d="M1 3.5 L12 3.5 M1 7.5 L11 7.5 Q14 7.5 14 10 Q14 12.5 11 12.5 L7 12.5 M1 12.5 L4 12.5 M8.5 10.5 L6.5 12.5 L8.5 14.5" fill="none" stroke="#e4e4e4" stroke-width="1.2" stroke-linejoin="round" stroke-linecap="round"/></svg>
<svg class="a" style="left:497px;top:381px;" width="12" height="17" viewBox="0 0 12 17"><path d="M6 10 Q1 10 1 5.5 Q1 1.5 6 1.5 L11 1.5 M6.5 1.5 L6.5 15 M9.5 1.5 L9.5 15" fill="none" stroke="#e4e4e4" stroke-width="1.3" stroke-linejoin="round" stroke-linecap="round"/><path d="M6 1.5 Q2.5 1.5 2.5 5.5 Q2.5 9.5 6 9.5 Z" fill="#e4e4e4"/></svg>
<div class="a" style="left:515px;top:378px;width:23px;height:21px;background:#0a2440;border:1px solid #1c4f80"></div>
<svg class="a" style="left:518px;top:381px;" width="16" height="17" viewBox="0 0 16 17"><path d="M1.5 6 L3.5 8 L1.5 10 M5 3 L13 3 M5 8 L15 8 M5 13 L13 13" fill="none" stroke="#e4e4e4" stroke-width="1.3" stroke-linejoin="round" stroke-linecap="round"/></svg>
<svg class="a" style="left:541px;top:381px;" width="17" height="17" viewBox="0 0 17 17"><path d="M4.5 4 L1 8 L4.5 12 M12.5 4 L16 8 L12.5 12 M10.5 2 L6.5 14" fill="none" stroke="#e4e4e4" stroke-width="1.3" stroke-linejoin="round" stroke-linecap="round"/></svg>
<svg class="a" style="left:564px;top:381px;" width="16" height="17" viewBox="0 0 16 17"><path d="M1 3.5 L5.5 1.5 L10.5 3.5 L15 1.5 L15 13 L10.5 15 L5.5 13 L1 15 Z M5.5 1.5 L5.5 13 M10.5 3.5 L10.5 15" fill="none" stroke="#e4e4e4" stroke-width="1.3" stroke-linejoin="round" stroke-linecap="round"/></svg>
<svg class="a" style="left:587px;top:381px;" width="16" height="17" viewBox="0 0 16 17"><path d="M5 1 L11 1 L15 5 L15 11 Q15 12 14 12 L6 12 Q5 12 5 11 Z M11 1 L11 5 L15 5" fill="none" stroke="#e4e4e4" stroke-width="1.3" stroke-linejoin="round" stroke-linecap="round"/><path d="M3 3.5 L3 13 Q3 14 4 14 L12 14 M1 5.5 L1 15 Q1 16 2 16 L10 16" fill="none" stroke="#e4e4e4" stroke-width="1.1" stroke-linejoin="round" stroke-linecap="round"/></svg>
<span class="t" id="t55" style="left:610px;top:381px;font-family:'Liberation Serif',serif;font-size:17px;line-height:17px;color:#e4e4e4;transform:scaleX(1.3028);"><i>fx</i></span>
<svg class="a" style="left:633px;top:381px;" width="17" height="17" viewBox="0 0 17 17"><rect x="1" y="1.5" width="15" height="10" rx="1" fill="none" stroke="#e4e4e4" stroke-width="1.3" stroke-linejoin="round" stroke-linecap="round"/><rect x="3.5" y="4" width="2" height="5" fill="#e4e4e4"/><rect x="7" y="4" width="6.5" height="5" fill="none" stroke="#e4e4e4" stroke-width="1.1" stroke-linejoin="round" stroke-linecap="round"/><path d="M8.5 12 L8.5 14 M4.5 15 L12.5 15" fill="none" stroke="#e4e4e4" stroke-width="1.3" stroke-linejoin="round" stroke-linecap="round"/></svg>
<svg class="a" style="left:656px;top:381px;" width="17" height="17" viewBox="0 0 17 17"><path d="M1 5 L1 2.5 Q1 1 2.5 1 L5 1 M12 1 L14.5 1 Q16 1 16 2.5 L16 5 M16 12 L16 14.5 Q16 16 14.5 16 L12 16 M5 16 L2.5 16 Q1 16 1 14.5 L1 12" fill="none" stroke="#e4e4e4" stroke-width="1.2" stroke-linejoin="round" stroke-linecap="round"/><path d="M3.5 9 Q8.5 3 13.5 9" fill="none" stroke="#e4e4e4" stroke-width="1.2" stroke-linejoin="round" stroke-linecap="round"/><circle cx="8.5" cy="10" r="2.2" fill="none" stroke="#e4e4e4" stroke-width="1.2" stroke-linejoin="round" stroke-linecap="round"/></svg>
<div class="a" style="left:679px;top:380px;width:1px;height:18px;background:#5a5a5a;"></div>
<svg class="a" style="left:687px;top:381px;" width="17" height="17" viewBox="0 0 17 17"><circle cx="8" cy="8.5" r="7.3" fill="none" stroke="#e4e4e4" stroke-width="1.3" stroke-linejoin="round" stroke-linecap="round"/><circle cx="8" cy="8.5" r="4.6" fill="#e6e6e6"/></svg>
<svg class="a" style="left:711px;top:381px;" width="15" height="17" viewBox="0 0 15 17"><rect x="1" y="1.5" width="13" height="13" rx="1" fill="none" stroke="#6a6a6a" stroke-width="1.2" stroke-linejoin="round" stroke-linecap="round"/></svg>
<svg class="a" style="left:735px;top:381px;" width="14" height="17" viewBox="0 0 14 17"><path d="M1.5 1.5 L12.5 8.5 L1.5 15.5 Z" fill="none" stroke="#6a6a6a" stroke-width="1.2" stroke-linejoin="round" stroke-linecap="round"/></svg>
<svg class="a" style="left:757px;top:381px;" width="16" height="17" viewBox="0 0 16 17"><path d="M1 1.5 L7.5 8.5 L1 15.5 Z M7.5 1.5 L14.5 8.5 L7.5 15.5 Z" fill="none" stroke="#e4e4e4" stroke-width="1.3" stroke-linejoin="round" stroke-linecap="round"/></svg>
<svg class="a" style="left:780px;top:381px;" width="16" height="17" viewBox="0 0 16 17"><path d="M1 1 L9 1 L11 3 L11 8 M7 14 L1 14 L1 1 M3.5 1 L3.5 4 L8 4 L8 1" fill="none" stroke="#6a6a6a" stroke-width="1.2" stroke-linejoin="round" stroke-linecap="round"/><circle cx="10.5" cy="11.5" r="4.5" fill="#6a6a6a"/><path d="M9 9.5 L12.5 11.5 L9 13.5 Z" fill="#000"/></svg>
<div class="a" style="left:802px;top:380px;width:1px;height:18px;background:#5a5a5a;"></div>
<svg class="a" style="left:813px;top:381px;" width="12" height="17" viewBox="0 0 12 17"><path d="M1.5 1 L7 1 L10.5 4.5 L10.5 15 L1.5 15 Z M7 1 L7 4.5 L10.5 4.5" fill="none" stroke="#e4e4e4" stroke-width="1.1" stroke-linejoin="round" stroke-linecap="round"/><path d="M4 12.5 L5.5 14 L8.5 11" fill="none" stroke="#e4e4e4" stroke-width="1" stroke-linejoin="round" stroke-linecap="round"/></svg>
<svg class="a" style="left:836px;top:381px;" width="12" height="17" viewBox="0 0 12 17"><path d="M1.5 1 L7 1 L10.5 4.5 L10.5 15 L1.5 15 Z M7 1 L7 4.5 L10.5 4.5" fill="none" stroke="#e4e4e4" stroke-width="1.1" stroke-linejoin="round" stroke-linecap="round"/><path d="M4 9.5 L5.5 11 L8.5 8 M4 12.5 L5.5 14 L8.5 11" fill="none" stroke="#e4e4e4" stroke-width="1" stroke-linejoin="round" stroke-linecap="round"/></svg>
<svg class="a" style="left:859px;top:381px;" width="10" height="17" viewBox="0 0 10 17"><path d="M1.5 3 L1.5 13 M8.5 3 L3 8 L8.5 13" fill="none" stroke="#e4e4e4" stroke-width="2.2" stroke-linejoin="round" stroke-linecap="round"/></svg>
<svg class="a" style="left:882px;top:381px;" width="8" height="17" viewBox="0 0 8 17"><path d="M6 3 L1.5 8 L6 13" fill="none" stroke="#e4e4e4" stroke-width="2" stroke-linejoin="round" stroke-linecap="round"/></svg>
<svg class="a" style="left:907px;top:381px;" width="8" height="17" viewBox="0 0 8 17"><path d="M1.5 3 L6 8 L1.5 13" fill="none" stroke="#e4e4e4" stroke-width="2" stroke-linejoin="round" stroke-linecap="round"/></svg>
<svg class="a" style="left:928px;top:381px;" width="10" height="17" viewBox="0 0 10 17"><path d="M8 3 L8 13 M1.5 3 L6.5 8 L1.5 13" fill="none" stroke="#e4e4e4" stroke-width="2.2" stroke-linejoin="round" stroke-linecap="round"/></svg>
<svg class="a" style="left:948px;top:381px;" width="14" height="17" viewBox="0 0 14 17"><path d="M4 3 L4 1 L9 1 L12.5 4.5 L12.5 15 L4 15 L4 12" fill="none" stroke="#e4e4e4" stroke-width="1.1" stroke-linejoin="round" stroke-linecap="round"/><path d="M1 7 L4 7 L4 5 L7 8 L4 11 L4 9 L1 9 Z" fill="#e4e4e4"/><path d="M7.5 6.5 L10.5 6.5 M7.5 9 L10.5 9 M7.5 11.5 L10.5 11.5" fill="none" stroke="#e4e4e4" stroke-width="1" stroke-linejoin="round" stroke-linecap="round"/></svg>
<svg class="a" style="left:972px;top:381px;" width="14" height="17" viewBox="0 0 14 17"><path d="M4 3 L4 1 L9 1 L12.5 4.5 L12.5 15 L4 15 L4 12" fill="none" stroke="#e4e4e4" stroke-width="1.1" stroke-linejoin="round" stroke-linecap="round"/><path d="M1 7 L4 7 L4 5 L7 8 L4 11 L4 9 L1 9 Z" fill="#e4e4e4"/><path d="M7.5 6.5 L10.5 6.5 M7.5 9 L10.5 9 M7.5 11.5 L10.5 11.5" fill="none" stroke="#e4e4e4" stroke-width="1" stroke-linejoin="round" stroke-linecap="round"/></svg>
<svg class="a" style="left:995px;top:381px;" width="14" height="17" viewBox="0 0 14 17"><path d="M4 3 L4 1 L9 1 L12.5 4.5 L12.5 15 L4 15 L4 12" fill="none" stroke="#e4e4e4" stroke-width="1.1" stroke-linejoin="round" stroke-linecap="round"/><path d="M1 7 L4 7 L4 5 L7 8 L4 11 L4 9 L1 9 Z" fill="#e4e4e4"/><path d="M7.5 6.5 L10.5 6.5 M7.5 9 L10.5 9 M7.5 11.5 L10.5 11.5" fill="none" stroke="#e4e4e4" stroke-width="1" stroke-linejoin="round" stroke-linecap="round"/></svg>
<svg class="a" style="left:1020px;top:381px;" width="14" height="17" viewBox="0 0 14 17"><path d="M1 3 L8 3 M1 6.5 L7 6.5 M1 10 L7 10 M1 13.5 L8 13.5 M9 3 Q13 8 9 13.5 M9 13.5 L11 13.5 M9 13.5 L9 11.5" fill="none" stroke="#e4e4e4" stroke-width="1.1" stroke-linejoin="round" stroke-linecap="round"/></svg>
<svg class="a" style="left:1041px;top:381px;" width="15" height="17" viewBox="0 0 15 17"><rect x="4.5" y="1" width="6" height="3" fill="none" stroke="#e4e4e4" stroke-width="1" stroke-linejoin="round" stroke-linecap="round"/><rect x="0.5" y="7" width="5" height="3" fill="none" stroke="#777" stroke-width="1" stroke-linejoin="round" stroke-linecap="round"/><rect x="6" y="7" width="5" height="3" fill="none" stroke="#e4e4e4" stroke-width="1" stroke-linejoin="round" stroke-linecap="round"/><rect x="4" y="12.5" width="5" height="3" fill="none" stroke="#e4e4e4" stroke-width="1" stroke-linejoin="round" stroke-linecap="round"/><rect x="10" y="12.5" width="4.5" height="3" fill="none" stroke="#777" stroke-width="1" stroke-linejoin="round" stroke-linecap="round"/><path d="M7.5 4 L8.5 7 M8.5 10 L6.5 12.5" fill="none" stroke="#e4e4e4" stroke-width="1" stroke-linejoin="round" stroke-linecap="round"/></svg>
<svg class="a" style="left:1063px;top:381px;" width="17" height="17" viewBox="0 0 17 17"><path d="M1 1 L1 2 M1 4 L1 5 M1 8 L1 9 M1 13 L1 14" fill="none" stroke="#e4e4e4" stroke-width="1" stroke-linejoin="round" stroke-linecap="round"/><rect x="6" y="1" width="6" height="3" fill="none" stroke="#e4e4e4" stroke-width="1" stroke-linejoin="round" stroke-linecap="round"/><rect x="3" y="7" width="5" height="3" fill="none" stroke="#777" stroke-width="1" stroke-linejoin="round" stroke-linecap="round"/><rect x="9" y="7" width="5" height="3" fill="none" stroke="#e4e4e4" stroke-width="1" stroke-linejoin="round" stroke-linecap="round"/><rect x="6" y="12.5" width="5" height="3" fill="none" stroke="#e4e4e4" stroke-width="1" stroke-linejoin="round" stroke-linecap="round"/><rect x="12" y="12.5" width="4" height="3" fill="none" stroke="#777" stroke-width="1" stroke-linejoin="round" stroke-linecap="round"/></svg>
<svg class="a" style="left:1086px;top:381px;" width="16" height="17" viewBox="0 0 16 17"><path d="M3.5 3 L1 5 L3.5 7 M6 3 L8.5 5 L6 7 M3 9 L3 12 L7 12 M10 10 L8 12 L10 14 M13 10 L15 12 L13 14" fill="none" stroke="#e4e4e4" stroke-width="1.1" stroke-linejoin="round" stroke-linecap="round"/><circle cx="12" cy="4" r="3" fill="#e4e4e4"/></svg>
<svg class="a" style="left:1110px;top:381px;" width="14" height="17" viewBox="0 0 14 17"><path d="M4 1 L9.5 1 L13 4.5 L13 15 L7 15 M4 1 L4 6 M9.5 1 L9.5 4.5 L13 4.5" fill="none" stroke="#e4e4e4" stroke-width="1.1" stroke-linejoin="round" stroke-linecap="round"/><path d="M3 8 L2 14 M6 8 L5 14 M0.5 10 L7 10 M0.5 12.5 L7 12.5" fill="none" stroke="#e4e4e4" stroke-width="1.4" stroke-linejoin="round" stroke-linecap="round"/></svg>
<span class="t" id="t56" style="left:1132px;top:381px;font-family:'Liberation Sans',sans-serif;font-size:17px;line-height:17px;color:#e4e4e4;transform:scaleX(1.3223);">&amp;</span>
<span class="t" id="t57" style="left:1154px;top:381px;font-family:'Liberation Sans',sans-serif;font-size:17px;line-height:17px;color:#e4e4e4;font-style:italictransform:scaleX(1.3223);">&amp;</span>
<svg class="a" style="left:1155px;top:380px;" width="16" height="18" viewBox="0 0 16 18"><path d="M15 1 L2 17" fill="none" stroke="#e4e4e4" stroke-width="1.1" stroke-linejoin="round" stroke-linecap="round"/></svg>
<span class="t" id="t58" style="left:1177px;top:383px;font-family:'Liberation Sans',sans-serif;font-size:11px;line-height:11px;color:#e4e4e4;transform:scaleX(1.0706);">&lt;!--</span>
<span class="t" id="t59" style="left:1200px;top:383px;font-family:'Liberation Sans',sans-serif;font-size:11px;line-height:11px;color:#e4e4e4;transform:scaleX(1.0706);">&lt;!--</span>
<svg class="a" style="left:1200px;top:380px;" width="17" height="18" viewBox="0 0 17 18"><path d="M15.5 1 L2 17" fill="none" stroke="#e4e4e4" stroke-width="1.1" stroke-linejoin="round" stroke-linecap="round"/></svg>
<svg class="a" style="left:1224px;top:381px;" width="17" height="17" viewBox="0 0 17 17"><path d="M2 14.5 L8.5 8 M10 2 Q13 0 15 2 L12.5 4.5 L13.5 5.5 L16 3 Q17 6 15 8 Q13 9.5 10 8.5 L3.5 15 Q2.5 16 1.5 15 Q0.5 14 1.5 13 L8 6.5 Q7 3.5 10 2" fill="none" stroke="#e4e4e4" stroke-width="1.2" stroke-linejoin="round" stroke-linecap="round"/></svg>
<div class="a" style="left:5px;top:403px;width:201px;height:18px;border:1px solid #00ff3a"></div>
<span class="t" id="t60" style="left:6px;top:406px;font-family:'Liberation Sans',sans-serif;font-size:12px;line-height:12px;color:#00ff3a;transform:scaleX(0.9051);">JSON Viewer</span>
<span class="t" id="t61" style="left:192px;top:406px;font-family:'Liberation Sans',sans-serif;font-size:12px;line-height:12px;color:#00ff3a;transform:scaleX(1.3333);">x</span>
<div class="a" style="left:5px;top:423px;width:201px;height:16px;background:#0a7cff;border-top:1px solid #00ff3a;border-bottom:1px solid #00ff3a"></div>
<div class="a" style="left:7px;top:424px;width:32px;height:14px;background:#3c3c3c;"></div>
<span class="t" id="t62" style="left:9px;top:425px;font-family:'Liberation Sans',sans-serif;font-size:12px;line-height:12px;color:#00ff3a;transform:scaleX(0.8433);">JSON</span>
<div class="a" style="left:17px;top:440px;width:1px;height:1px;background:#9a9a9a;"></div>
<div class="a" style="left:17px;top:442px;width:1px;height:1px;background:#9a9a9a;"></div>
<div class="a" style="left:17px;top:444px;width:1px;height:1px;background:#9a9a9a;"></div>
<div class="a" style="left:17px;top:446px;width:1px;height:1px;background:#9a9a9a;"></div>
<div class="a" style="left:17px;top:448px;width:1px;height:1px;background:#9a9a9a;"></div>
<div class="a" style="left:19px;top:447px;width:1px;height:1px;background:#9a9a9a;"></div>
<div class="a" style="left:21px;top:447px;width:1px;height:1px;background:#9a9a9a;"></div>
<div class="a" style="left:23px;top:447px;width:1px;height:1px;background:#9a9a9a;"></div>
<div class="a" style="left:25px;top:447px;width:1px;height:1px;background:#9a9a9a;"></div>
<span class="t" id="t63" style="left:28px;top:441px;font-family:'Liberation Sans',sans-serif;font-size:12px;line-height:12px;color:#ffffff;transform:scaleX(0.8823);">Error:Please select a JSON String.</span>
<svg class="a" style="left:213px;top:409px;" width="12" height="12" viewBox="0 0 12 12"><path d="M1.2 10.8 L1.8 8 L7.2 2.6 L9.4 4.8 L4 10.2 Z" fill="#6aaee8"/><path d="M8.2 1.6 L9.2 0.8 Q10 0.2 10.8 1 L11.2 1.4 Q12 2.2 11.2 3 L10.4 3.8 Z" fill="#6aaee8"/></svg>
<span class="t" id="t64" style="left:228px;top:410px;font-family:'Liberation Sans',sans-serif;font-size:12px;line-height:12px;color:#a8a8a8;transform:scaleX(0.9101);">INSERT INTO UpdMarkingTr Время ПП.sql</span>
<svg class="a" style="left:461px;top:410px;" width="12" height="12" viewBox="0 0 12 12"><rect x="0.6" y="0.6" width="10" height="10" rx="1.5" fill="#141414" stroke="#d4d4d4" stroke-width="1.2"/><path d="M3.3 3.3 L7.9 7.9 M7.9 3.3 L3.3 7.9" stroke="#e6e6e6" stroke-width="1.2"/></svg>
<div class="a" style="left:477px;top:407px;width:1px;height:18px;background:#00ff3a;"></div>
<svg class="a" style="left:485px;top:409px;" width="12" height="12" viewBox="0 0 12 12"><path d="M1.2 10.8 L1.8 8 L7.2 2.6 L9.4 4.8 L4 10.2 Z" fill="#6aaee8"/><path d="M8.2 1.6 L9.2 0.8 Q10 0.2 10.8 1 L11.2 1.4 Q12 2.2 11.2 3 L10.4 3.8 Z" fill="#6aaee8"/></svg>
<span class="t" id="t65" style="left:500px;top:410px;font-family:'Liberation Sans',sans-serif;font-size:12px;line-height:12px;color:#a8a8a8;transform:scaleX(0.9071);">INSERT INTO UpdMarking.sql</span>
<svg class="a" style="left:668px;top:410px;" width="12" height="12" viewBox="0 0 12 12"><rect x="0.6" y="0.6" width="10" height="10" rx="1.5" fill="#141414" stroke="#d4d4d4" stroke-width="1.2"/><path d="M3.3 3.3 L7.9 7.9 M7.9 3.3 L3.3 7.9" stroke="#e6e6e6" stroke-width="1.2"/></svg>
<div class="a" style="left:684px;top:407px;width:1px;height:18px;background:#00ff3a;"></div>
<svg class="a" style="left:692px;top:409px;" width="12" height="12" viewBox="0 0 12 12"><path d="M1.2 10.8 L1.8 8 L7.2 2.6 L9.4 4.8 L4 10.2 Z" fill="#6aaee8"/><path d="M8.2 1.6 L9.2 0.8 Q10 0.2 10.8 1 L11.2 1.4 Q12 2.2 11.2 3 L10.4 3.8 Z" fill="#6aaee8"/></svg>
<span class="t" id="t66" style="left:708px;top:410px;font-family:'Liberation Sans',sans-serif;font-size:12px;line-height:12px;color:#a8a8a8;transform:scaleX(0.8770);">1659793 (1).json</span>
<svg class="a" style="left:807px;top:410px;" width="12" height="12" viewBox="0 0 12 12"><rect x="0.6" y="0.6" width="10" height="10" rx="1.5" fill="#141414" stroke="#d4d4d4" stroke-width="1.2"/><path d="M3.3 3.3 L7.9 7.9 M7.9 3.3 L3.3 7.9" stroke="#e6e6e6" stroke-width="1.2"/></svg>
<div class="a" style="left:824px;top:407px;width:1px;height:18px;background:#00ff3a;"></div>
<svg class="a" style="left:832px;top:409px;" width="12" height="12" viewBox="0 0 12 12"><path d="M1.2 10.8 L1.8 8 L7.2 2.6 L9.4 4.8 L4 10.2 Z" fill="#6aaee8"/><path d="M8.2 1.6 L9.2 0.8 Q10 0.2 10.8 1 L11.2 1.4 Q12 2.2 11.2 3 L10.4 3.8 Z" fill="#6aaee8"/></svg>
<span class="t" id="t67" style="left:848px;top:410px;font-family:'Liberation Sans',sans-serif;font-size:12px;line-height:12px;color:#a8a8a8;transform:scaleX(0.8624);">7577.xml</span>
<svg class="a" style="left:911px;top:410px;" width="12" height="12" viewBox="0 0 12 12"><rect x="0.6" y="0.6" width="10" height="10" rx="1.5" fill="#141414" stroke="#d4d4d4" stroke-width="1.2"/><path d="M3.3 3.3 L7.9 7.9 M7.9 3.3 L3.3 7.9" stroke="#e6e6e6" stroke-width="1.2"/></svg>
<div class="a" style="left:926px;top:407px;width:1px;height:18px;background:#00ff3a;"></div>
<svg class="a" style="left:935px;top:409px;" width="12" height="12" viewBox="0 0 12 12"><path d="M1.2 10.8 L1.8 8 L7.2 2.6 L9.4 4.8 L4 10.2 Z" fill="#6aaee8"/><path d="M8.2 1.6 L9.2 0.8 Q10 0.2 10.8 1 L11.2 1.4 Q12 2.2 11.2 3 L10.4 3.8 Z" fill="#6aaee8"/></svg>
<span class="t" id="t68" style="left:950px;top:410px;font-family:'Liberation Sans',sans-serif;font-size:12px;line-height:12px;color:#a8a8a8;transform:scaleX(0.8978);">TRN_52485aff-dff6-4ee4-9e13-05deee02294c.json</span>
<svg class="a" style="left:1213px;top:410px;" width="12" height="12" viewBox="0 0 12 12"><rect x="0.6" y="0.6" width="10" height="10" rx="1.5" fill="#141414" stroke="#d4d4d4" stroke-width="1.2"/><path d="M3.3 3.3 L7.9 7.9 M7.9 3.3 L3.3 7.9" stroke="#e6e6e6" stroke-width="1.2"/></svg>
<div class="a" style="left:1230px;top:407px;width:1px;height:18px;background:#00ff3a;"></div>
<svg class="a" style="left:1238px;top:409px;" width="12" height="12" viewBox="0 0 12 12"><path d="M1.2 10.8 L1.8 8 L7.2 2.6 L9.4 4.8 L4 10.2 Z" fill="#6aaee8"/><path d="M8.2 1.6 L9.2 0.8 Q10 0.2 10.8 1 L11.2 1.4 Q12 2.2 11.2 3 L10.4 3.8 Z" fill="#6aaee8"/></svg>
<span class="t" id="t69" style="left:1253px;top:410px;font-family:'Liberation Sans',sans-serif;font-size:12px;line-height:12px;color:#a8a8a8;transform:scaleX(0.8978);">TRN_52485aff-dff6-4ee4-9e13-05deee02294c.json</span>
<svg class="a" style="left:1517px;top:410px;" width="12" height="12" viewBox="0 0 12 12"><rect x="0.6" y="0.6" width="10" height="10" rx="1.5" fill="#141414" stroke="#d4d4d4" stroke-width="1.2"/><path d="M3.3 3.3 L7.9 7.9 M7.9 3.3 L3.3 7.9" stroke="#e6e6e6" stroke-width="1.2"/></svg>
<div class="a" style="left:1533px;top:407px;width:1px;height:18px;background:#00ff3a;"></div>
<svg class="a" style="left:213px;top:434px;" width="12" height="12" viewBox="0 0 12 12"><path d="M1.2 10.8 L1.8 8 L7.2 2.6 L9.4 4.8 L4 10.2 Z" fill="#6aaee8"/><path d="M8.2 1.6 L9.2 0.8 Q10 0.2 10.8 1 L11.2 1.4 Q12 2.2 11.2 3 L10.4 3.8 Z" fill="#6aaee8"/></svg>
<span class="t" id="t70" style="left:228px;top:435px;font-family:'Liberation Sans',sans-serif;font-size:12px;line-height:12px;color:#a8a8a8;transform:scaleX(0.8840);">ON_NSCHFDOPPR_2BM-6670381056-20130222033937706238200000000000_2JM-DLINK-EA2EF7A0-4C9D-415A-A6D2-78DD212B37E1_20251120_7d4407df-9f65-43dd-babe-76772988db8b_0_0_0_0_0_00.xml</span>
<svg class="a" style="left:1259px;top:435px;" width="12" height="12" viewBox="0 0 12 12"><rect x="0.6" y="0.6" width="10" height="10" rx="1.5" fill="#141414" stroke="#d4d4d4" stroke-width="1.2"/><path d="M3.3 3.3 L7.9 7.9 M7.9 3.3 L3.3 7.9" stroke="#e6e6e6" stroke-width="1.2"/></svg>
<div class="a" style="left:1275px;top:432px;width:1px;height:18px;background:#00ff3a;"></div>
<span class="t" id="t71" style="left:1298px;top:435px;font-family:'Liberation Sans',sans-serif;font-size:12px;line-height:12px;color:#a8a8a8;transform:scaleX(0.8995);">DocFlow.Services.Management.exe.config</span>
<svg class="a" style="left:1517px;top:435px;" width="12" height="12" viewBox="0 0 12 12"><rect x="0.6" y="0.6" width="10" height="10" rx="1.5" fill="#141414" stroke="#d4d4d4" stroke-width="1.2"/><path d="M3.3 3.3 L7.9 7.9 M7.9 3.3 L3.3 7.9" stroke="#e6e6e6" stroke-width="1.2"/></svg>
<div class="a" style="left:1533px;top:432px;width:1px;height:18px;background:#00ff3a;"></div>
<span class="t" id="t72" style="left:228px;top:460px;font-family:'Liberation Sans',sans-serif;font-size:12px;line-height:12px;color:#a8a8a8;transform:scaleX(0.8795);">191506638 (2).xml</span>
<svg class="a" style="left:621px;top:460px;" width="12" height="12" viewBox="0 0 12 12"><rect x="0.6" y="0.6" width="10" height="10" rx="1.5" fill="#141414" stroke="#d4d4d4" stroke-width="1.2"/><path d="M3.3 3.3 L7.9 7.9 M7.9 3.3 L3.3 7.9" stroke="#e6e6e6" stroke-width="1.2"/></svg>
<div class="a" style="left:637px;top:457px;width:1px;height:18px;background:#00ff3a;"></div>
<span class="t" id="t73" style="left:661px;top:460px;font-family:'Liberation Sans',sans-serif;font-size:12px;line-height:12px;color:#a8a8a8;transform:scaleX(0.8948);">UPDATE -2.sql</span>
<svg class="a" style="left:1037px;top:460px;" width="12" height="12" viewBox="0 0 12 12"><rect x="0.6" y="0.6" width="10" height="10" rx="1.5" fill="#141414" stroke="#d4d4d4" stroke-width="1.2"/><path d="M3.3 3.3 L7.9 7.9 M7.9 3.3 L3.3 7.9" stroke="#e6e6e6" stroke-width="1.2"/></svg>
<div class="a" style="left:1053px;top:457px;width:1px;height:18px;background:#00ff3a;"></div>
<span class="t" id="t74" style="left:1077px;top:460px;font-family:'Liberation Sans',sans-serif;font-size:12px;line-height:12px;color:#a8a8a8;transform:scaleX(0.9067);">191506638_покупатель.xml</span>
<svg class="a" style="left:1517px;top:460px;" width="12" height="12" viewBox="0 0 12 12"><rect x="0.6" y="0.6" width="10" height="10" rx="1.5" fill="#141414" stroke="#d4d4d4" stroke-width="1.2"/><path d="M3.3 3.3 L7.9 7.9 M7.9 3.3 L3.3 7.9" stroke="#e6e6e6" stroke-width="1.2"/></svg>
<div class="a" style="left:1533px;top:457px;width:1px;height:18px;background:#00ff3a;"></div>
<span class="t" id="t75" style="left:228px;top:485px;font-family:'Liberation Sans',sans-serif;font-size:12px;line-height:12px;color:#a8a8a8;transform:scaleX(0.8851);">ON_NSCHFDOPPR_2BM-6670381056-20130222033937706238200000000000_2JM-DLINK-EA2EF7A0-4C9D-415A-A6D2-78DD212B37E1_20251127_50f51ad3-1f29-4cd7-b19e-d6d208da1ebc_0_0_0_0_0_00.xml</span>
<svg class="a" style="left:1277px;top:485px;" width="12" height="12" viewBox="0 0 12 12"><rect x="0.6" y="0.6" width="10" height="10" rx="1.5" fill="#141414" stroke="#d4d4d4" stroke-width="1.2"/><path d="M3.3 3.3 L7.9 7.9 M7.9 3.3 L3.3 7.9" stroke="#e6e6e6" stroke-width="1.2"/></svg>
<div class="a" style="left:1293px;top:482px;width:1px;height:18px;background:#00ff3a;"></div>
<svg class="a" style="left:1301px;top:484px;" width="12" height="12" viewBox="0 0 12 12"><path d="M1.2 10.8 L1.8 8 L7.2 2.6 L9.4 4.8 L4 10.2 Z" fill="#6aaee8"/><path d="M8.2 1.6 L9.2 0.8 Q10 0.2 10.8 1 L11.2 1.4 Q12 2.2 11.2 3 L10.4 3.8 Z" fill="#6aaee8"/></svg>
<span class="t" id="t76" style="left:1316px;top:485px;font-family:'Liberation Sans',sans-serif;font-size:12px;line-height:12px;color:#a8a8a8;transform:scaleX(0.8747);">description.xml</span>
<svg class="a" style="left:1419px;top:485px;" width="12" height="12" viewBox="0 0 12 12"><rect x="0.6" y="0.6" width="10" height="10" rx="1.5" fill="#141414" stroke="#d4d4d4" stroke-width="1.2"/><path d="M3.3 3.3 L7.9 7.9 M7.9 3.3 L3.3 7.9" stroke="#e6e6e6" stroke-width="1.2"/></svg>
<div class="a" style="left:1435px;top:482px;width:1px;height:18px;background:#00ff3a;"></div>
<svg class="a" style="left:1443px;top:484px;" width="12" height="12" viewBox="0 0 12 12"><path d="M1.2 10.8 L1.8 8 L7.2 2.6 L9.4 4.8 L4 10.2 Z" fill="#6aaee8"/><path d="M8.2 1.6 L9.2 0.8 Q10 0.2 10.8 1 L11.2 1.4 Q12 2.2 11.2 3 L10.4 3.8 Z" fill="#6aaee8"/></svg>
<span class="t" id="t77" style="left:1459px;top:485px;font-family:'Liberation Sans',sans-serif;font-size:12px;line-height:12px;color:#a8a8a8;transform:scaleX(0.8715);">1.xsd</span>
<svg class="a" style="left:1517px;top:485px;" width="12" height="12" viewBox="0 0 12 12"><rect x="0.6" y="0.6" width="10" height="10" rx="1.5" fill="#141414" stroke="#d4d4d4" stroke-width="1.2"/><path d="M3.3 3.3 L7.9 7.9 M7.9 3.3 L3.3 7.9" stroke="#e6e6e6" stroke-width="1.2"/></svg>
<div class="a" style="left:1533px;top:482px;width:1px;height:18px;background:#00ff3a;"></div>
<div class="a" style="left:1424px;top:503px;width:109px;height:22px;background:#0a7cff;"></div>
<div class="a" style="left:1424px;top:503px;width:109px;height:2px;background:#f5a623;"></div>
<span class="t" id="t78" style="left:228px;top:510px;font-family:'Liberation Sans',sans-serif;font-size:12px;line-height:12px;color:#a8a8a8;transform:scaleX(0.8846);">ON_NSCHFDOPPR_2JM-XXXXX-E466378B-1694-4627-994D-70F7342D201B_2JM-DLINK-62C860F1-27DE-48BC-9DAE-AEBC464806D9_20251124_8b8f30e2-c047-4298-9456-5a8b3d0149ab_0_0_0_0_0_00.xml</span>
<svg class="a" style="left:1249px;top:510px;" width="12" height="12" viewBox="0 0 12 12"><rect x="0.6" y="0.6" width="10" height="10" rx="1.5" fill="#141414" stroke="#d4d4d4" stroke-width="1.2"/><path d="M3.3 3.3 L7.9 7.9 M7.9 3.3 L3.3 7.9" stroke="#e6e6e6" stroke-width="1.2"/></svg>
<div class="a" style="left:1265px;top:507px;width:1px;height:18px;background:#00ff3a;"></div>
<span class="t" id="t79" style="left:1288px;top:510px;font-family:'Liberation Sans',sans-serif;font-size:12px;line-height:12px;color:#a8a8a8;transform:scaleX(0.9063);">2.xsd</span>
<svg class="a" style="left:1319px;top:510px;" width="12" height="12" viewBox="0 0 12 12"><rect x="0.6" y="0.6" width="10" height="10" rx="1.5" fill="#141414" stroke="#d4d4d4" stroke-width="1.2"/><path d="M3.3 3.3 L7.9 7.9 M7.9 3.3 L3.3 7.9" stroke="#e6e6e6" stroke-width="1.2"/></svg>
<div class="a" style="left:1335px;top:507px;width:1px;height:18px;background:#00ff3a;"></div>
<span class="t" id="t80" style="left:1358px;top:510px;font-family:'Liberation Sans',sans-serif;font-size:12px;line-height:12px;color:#a8a8a8;transform:scaleX(0.9036);">data.xsd</span>
<svg class="a" style="left:1404px;top:510px;" width="12" height="12" viewBox="0 0 12 12"><rect x="0.6" y="0.6" width="10" height="10" rx="1.5" fill="#141414" stroke="#d4d4d4" stroke-width="1.2"/><path d="M3.3 3.3 L7.9 7.9 M7.9 3.3 L3.3 7.9" stroke="#e6e6e6" stroke-width="1.2"/></svg>
<div class="a" style="left:1420px;top:507px;width:1px;height:18px;background:#00ff3a;"></div>
<span class="t" id="t81" style="left:1443px;top:510px;font-family:'Liberation Sans',sans-serif;font-size:12px;line-height:12px;color:#f0f0f0;transform:scaleX(0.8747);">description.xml</span>
<svg class="a" style="left:1517px;top:510px;" width="12" height="12" viewBox="0 0 12 12"><rect x="0.6" y="0.6" width="10" height="10" rx="1.5" fill="#141414" stroke="#d4d4d4" stroke-width="1.2"/><path d="M3.3 3.3 L7.9 7.9 M7.9 3.3 L3.3 7.9" stroke="#e6e6e6" stroke-width="1.2"/></svg>
<div class="a" style="left:1533px;top:503px;width:1px;height:22px;background:#00ff3a;"></div>
<div class="a" style="left:1420px;top:503px;width:1px;height:22px;background:#00ff3a;"></div>
<div class="a" style="left:211px;top:526px;width:1323px;height:605px;background:#000;border:1px solid #6e6e6e"></div>
<div class="a" style="left:212px;top:527px;width:54px;height:586px;background:#333333;"></div>
<div class="a" style="left:266px;top:527px;width:14px;height:586px;background:#1c1c1c;"></div>
<div class="a" style="left:280px;top:527px;width:1253px;height:16px;background:#333333;"></div>
<div class="a" style="left:272px;top:557px;width:1px;height:155px;background:#8a8a8a;"></div>
<svg class="a" style="left:266px;top:544px;" width="14" height="14" viewBox="0 0 14 14"><rect x="0.5" y="0.5" width="12" height="12" fill="#333" stroke="#8a8a8a" stroke-width="1"/><path d="M3 6.5 L10 6.5" stroke="#8a8a8a" stroke-width="1"/></svg>
<svg class="a" style="left:266px;top:560px;" width="14" height="14" viewBox="0 0 14 14"><rect x="0.5" y="0.5" width="12" height="12" fill="#333" stroke="#8a8a8a" stroke-width="1"/><path d="M3 6.5 L10 6.5" stroke="#8a8a8a" stroke-width="1"/></svg>
<svg class="a" style="left:266px;top:640px;" width="14" height="14" viewBox="0 0 14 14"><rect x="0.5" y="0.5" width="12" height="12" fill="#333" stroke="#8a8a8a" stroke-width="1"/><path d="M3 6.5 L10 6.5" stroke="#8a8a8a" stroke-width="1"/></svg>
<div class="a" style="left:272px;top:615px;width:7px;height:1px;background:#8a8a8a;"></div>
<div class="a" style="left:272px;top:695px;width:7px;height:1px;background:#8a8a8a;"></div>
<div class="a" style="left:272px;top:711px;width:7px;height:1px;background:#8a8a8a;"></div>
<span class="t" id="t82" style="left:231px;top:530px;font-family:'Liberation Mono',monospace;font-size:12.5px;line-height:12.5px;color:#c8c8c8;letter-spacing:-0.5px">1</span>
<span class="t" id="t83" style="left:231px;top:546px;font-family:'Liberation Mono',monospace;font-size:12.5px;line-height:12.5px;color:#c8c8c8;letter-spacing:-0.5px">2</span>
<span class="t" id="t84" style="left:231px;top:562px;font-family:'Liberation Mono',monospace;font-size:12.5px;line-height:12.5px;color:#c8c8c8;letter-spacing:-0.5px">3</span>
<span class="t" id="t85" style="left:231px;top:578px;font-family:'Liberation Mono',monospace;font-size:12.5px;line-height:12.5px;color:#c8c8c8;letter-spacing:-0.5px">4</span>
<span class="t" id="t86" style="left:231px;top:594px;font-family:'Liberation Mono',monospace;font-size:12.5px;line-height:12.5px;color:#c8c8c8;letter-spacing:-0.5px">5</span>
<span class="t" id="t87" style="left:231px;top:610px;font-family:'Liberation Mono',monospace;font-size:12.5px;line-height:12.5px;color:#c8c8c8;letter-spacing:-0.5px">6</span>
<span class="t" id="t88" style="left:231px;top:626px;font-family:'Liberation Mono',monospace;font-size:12.5px;line-height:12.5px;color:#c8c8c8;letter-spacing:-0.5px">7</span>
<span class="t" id="t89" style="left:231px;top:642px;font-family:'Liberation Mono',monospace;font-size:12.5px;line-height:12.5px;color:#c8c8c8;letter-spacing:-0.5px">8</span>
<span class="t" id="t90" style="left:231px;top:658px;font-family:'Liberation Mono',monospace;font-size:12.5px;line-height:12.5px;color:#c8c8c8;letter-spacing:-0.5px">9</span>
<span class="t" id="t91" style="left:224px;top:674px;font-family:'Liberation Mono',monospace;font-size:12.5px;line-height:12.5px;color:#c8c8c8;letter-spacing:-0.5px">10</span>
<span class="t" id="t92" style="left:224px;top:690px;font-family:'Liberation Mono',monospace;font-size:12.5px;line-height:12.5px;color:#c8c8c8;letter-spacing:-0.5px">11</span>
<span class="t" id="t93" style="left:224px;top:706px;font-family:'Liberation Mono',monospace;font-size:12.5px;line-height:12.5px;color:#c8c8c8;letter-spacing:-0.5px">12</span>
<span class="t" id="t94" style="left:280px;top:530px;font-family:'Liberation Mono',monospace;font-size:12.5px;line-height:12.5px;color:#fff;width:1253px;overflow:hidden;letter-spacing:-0.5px;"><span style="color:#00e080;">&lt;?</span><span style="color:#00ff00;">xml</span> <span style="color:#8080ff;">version</span><span style="color:#e0e0e0;">=</span><span style="color:#ffff00;">"1.0"</span> <span style="color:#8080ff;">encoding</span><span style="color:#e0e0e0;">=</span><span style="color:#ffff00;">"utf-8"</span><span style="color:#00e080;">?&gt;</span></span>
<span class="t" id="t95" style="left:280px;top:546px;font-family:'Liberation Mono',monospace;font-size:12.5px;line-height:12.5px;color:#fff;width:1253px;overflow:hidden;letter-spacing:-0.5px;"><span style="color:#00e000;">&lt;Сообщение</span> <span style="color:#8080ff;">Отправитель</span><span style="color:#e0e0e0;">=</span><span style="color:#ffff00;">"2JM-xxxxx-096963e2-368f-4508-a60b-508b075cfbab"</span> <span style="color:#8080ff;">Получатель</span><span style="color:#e0e0e0;">=</span><span style="color:#ffff00;">"2BM-7704218694-2012052808180351342630000000000"</span> <span style="color:#8080ff;">ДатаОтправки</span><span style="color:#e0e0e0;">=</span><span style="color:#ffff00;">"2025-12-01T07:54:02Z"</span> <span style="color:#8080ff;">xmlns</span><span style="color:#e0e0e0;">=</span><span style="color:#ffff00;">"</span><span style="color:#ffff00;text-decoration:underline;text-decoration-color:#f0f0f0">http</span></span>
<span class="t" id="t96" style="left:280px;top:562px;font-family:'Liberation Mono',monospace;font-size:12.5px;line-height:12.5px;color:#fff;width:1253px;overflow:hidden;letter-spacing:-0.5px;">  <span style="color:#00e000;">&lt;Документ</span> <span style="color:#8080ff;">ИдДокумента</span><span style="color:#e0e0e0;">=</span><span style="color:#ffff00;">"b5930dcc10d64dd79eca953c7c30a63e"</span> <span style="color:#8080ff;">ТипДокумента</span><span style="color:#e0e0e0;">=</span><span style="color:#ffff00;">"Неформализованный"</span> <span style="color:#8080ff;">ИмяФайла</span><span style="color:#e0e0e0;">=</span><span style="color:#ffff00;">"Удалить всех пользователей.png"</span> <span style="color:#8080ff;">ОжидаетсяПодписьПолучателя</span><span style="color:#e0e0e0;">=</span><span style="color:#ffff00;">"true"</span><span style="color:#00e000;">&gt;</span></span>
<span class="t" id="t97" style="left:280px;top:578px;font-family:'Liberation Mono',monospace;font-size:12.5px;line-height:12.5px;color:#fff;width:1253px;overflow:hidden;letter-spacing:-0.5px;">    <span style="color:#00e000;">&lt;Номер&gt;</span><span style="color:#ffffff;">1</span><span style="color:#00e000;">&lt;/Номер&gt;</span></span>
<span class="t" id="t98" style="left:280px;top:594px;font-family:'Liberation Mono',monospace;font-size:12.5px;line-height:12.5px;color:#fff;width:1253px;overflow:hidden;letter-spacing:-0.5px;">    <span style="color:#00e000;">&lt;Дата&gt;</span><span style="color:#ffffff;">2025-12-01</span><span style="color:#00e000;">&lt;/Дата&gt;</span></span>
<span class="t" id="t99" style="left:280px;top:610px;font-family:'Liberation Mono',monospace;font-size:12.5px;line-height:12.5px;color:#fff;width:1253px;overflow:hidden;letter-spacing:-0.5px;">  <span style="color:#00e000;">&lt;/Документ&gt;</span></span>
<span class="t" id="t100" style="left:280px;top:626px;font-family:'Liberation Mono',monospace;font-size:12.5px;line-height:12.5px;color:#fff;width:1253px;overflow:hidden;letter-spacing:-0.5px;">  <span style="color:#00e000;">&lt;ЭП</span> <span style="color:#8080ff;">Подписант</span><span style="color:#e0e0e0;">=</span><span style="color:#ffff00;">"2JM-xxxxx-096963e2-368f-4508-a60b-508b075cfbab"</span> <span style="color:#8080ff;">ИдЭП</span><span style="color:#e0e0e0;">=</span><span style="color:#ffff00;">"243bde5b2c5f44ada2670bc898757645"</span> <span style="color:#8080ff;">КДокументу</span><span style="color:#e0e0e0;">=</span><span style="color:#ffff00;">"b5930dcc10d64dd79eca953c7c30a63e"</span> <span style="color:#e07020;">/&gt;</span></span>
<span class="t" id="t101" style="left:280px;top:642px;font-family:'Liberation Mono',monospace;font-size:12.5px;line-height:12.5px;color:#fff;width:1253px;overflow:hidden;letter-spacing:-0.5px;">  <span style="color:#00e000;">&lt;МЧД&gt;</span></span>
<span class="t" id="t102" style="left:280px;top:658px;font-family:'Liberation Mono',monospace;font-size:12.5px;line-height:12.5px;color:#fff;width:1253px;overflow:hidden;letter-spacing:-0.5px;">    <span style="color:#00e000;">&lt;КПодписи&gt;</span><span style="color:#ffffff;">243bde5b2c5f44ada2670bc898757645</span><span style="color:#00e000;">&lt;/КПодписи&gt;</span></span>
<span class="t" id="t103" style="left:280px;top:674px;font-family:'Liberation Mono',monospace;font-size:12.5px;line-height:12.5px;color:#fff;width:1253px;overflow:hidden;letter-spacing:-0.5px;">    <span style="color:#00e000;">&lt;ФайлМЧД</span> <span style="color:#8080ff;">ИдФайлаМЧД</span><span style="color:#e0e0e0;">=</span><span style="color:#ffff00;">"94787bc55ba745159ad8be80fc9e7dd0"</span> <span style="color:#8080ff;">ИдЭПкМЧД</span><span style="color:#e0e0e0;">=</span><span style="color:#ffff00;">"081b2175fb9d4af49f8387ebc8a3bb58"</span> <span style="color:#e07020;">/&gt;</span></span>
<span class="t" id="t104" style="left:280px;top:690px;font-family:'Liberation Mono',monospace;font-size:12.5px;line-height:12.5px;color:#fff;width:1253px;overflow:hidden;letter-spacing:-0.5px;">  <span style="color:#00e000;">&lt;/МЧД&gt;</span></span>
<span class="t" id="t105" style="left:280px;top:706px;font-family:'Liberation Mono',monospace;font-size:12.5px;line-height:12.5px;color:#fff;width:1253px;overflow:hidden;letter-spacing:-0.5px;"><span style="color:#00e000;">&lt;/Сообщение&gt;</span></span>
<div class="a" style="left:1533px;top:527px;width:1px;height:604px;background:#6e6e6e;"></div>
<div class="a" style="left:212px;top:1113px;width:1321px;height:17px;background:#1a1a1a;"></div>
<div class="a" style="left:229px;top:1114px;width:946px;height:15px;background:#4f4f4f;"></div>
<svg class="a" style="left:216px;top:1116px;" width="10" height="11" viewBox="0 0 10 11"><path d="M7 1.5 L3 5.5 L7 9.5" fill="none" stroke="#9a9a9a" stroke-width="2"/></svg>
<svg class="a" style="left:1519px;top:1116px;" width="10" height="11" viewBox="0 0 10 11"><path d="M3 1.5 L7 5.5 L3 9.5" fill="none" stroke="#6a6a6a" stroke-width="2"/></svg>
<div class="a" style="left:774px;top:1136px;width:1px;height:17px;background:#00ff3a;"></div>
<div class="a" style="left:994px;top:1136px;width:1px;height:17px;background:#00ff3a;"></div>
<div class="a" style="left:1254px;top:1136px;width:1px;height:17px;background:#00ff3a;"></div>
<div class="a" style="left:1364px;top:1136px;width:1px;height:17px;background:#00ff3a;"></div>
<div class="a" style="left:1484px;top:1136px;width:1px;height:17px;background:#00ff3a;"></div>
<div class="a" style="left:1514px;top:1136px;width:1px;height:17px;background:#00ff3a;"></div>
<span class="t" id="t106" style="left:780px;top:1140px;font-family:'Liberation Sans',sans-serif;font-size:12px;line-height:12px;color:#00ff3a;transform:scaleX(0.9546);">length : 1 128    lines : 12</span>
<span class="t" id="t107" style="left:999px;top:1140px;font-family:'Liberation Sans',sans-serif;font-size:12px;line-height:12px;color:#00ff3a;transform:scaleX(0.9399);">Ln : 1    Col : 1    Pos : 1</span>
<span class="t" id="t108" style="left:1260px;top:1140px;font-family:'Liberation Sans',sans-serif;font-size:12px;line-height:12px;color:#00ff3a;transform:scaleX(0.9505);">Windows (CR LF)</span>
<span class="t" id="t109" style="left:1369px;top:1140px;font-family:'Liberation Sans',sans-serif;font-size:12px;line-height:12px;color:#00ff3a;transform:scaleX(0.9706);">UTF-8</span>
<span class="t" id="t110" style="left:1490px;top:1140px;font-family:'Liberation Sans',sans-serif;font-size:12px;line-height:12px;color:#00ff3a;transform:scaleX(0.9493);">INS</span>
<div class="a" style="left:1531px;top:1146px;width:2px;height:2px;background:#e6e6e6;"></div>
<div class="a" style="left:1528px;top:1149px;width:2px;height:2px;background:#e6e6e6;"></div>
<div class="a" style="left:1531px;top:1149px;width:2px;height:2px;background:#e6e6e6;"></div>
<div class="a" style="left:1525px;top:1152px;width:2px;height:2px;background:#e6e6e6;"></div>
<div class="a" style="left:1528px;top:1152px;width:2px;height:2px;background:#e6e6e6;"></div>
<div class="a" style="left:1531px;top:1152px;width:2px;height:2px;background:#e6e6e6;"></div>
</body></html>
